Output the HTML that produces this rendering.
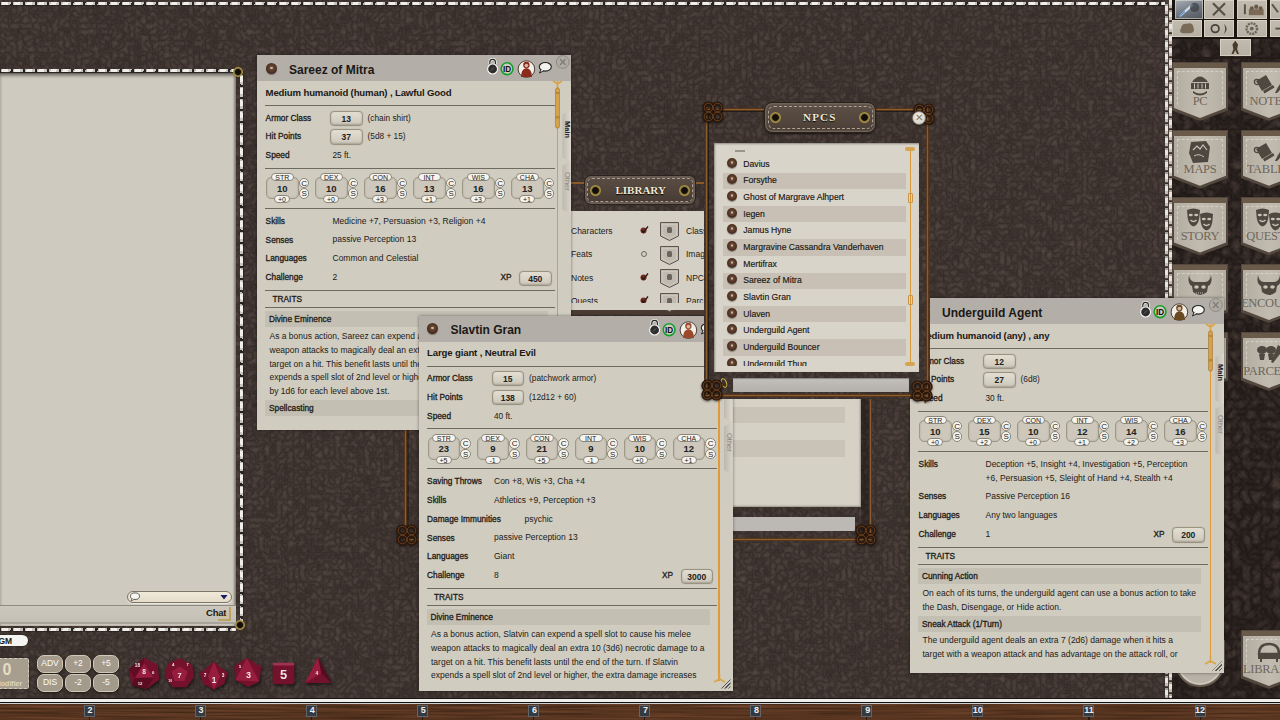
<!DOCTYPE html><html><head><meta charset="utf-8"><title>FG</title><style>
*{margin:0;padding:0;box-sizing:border-box}
html,body{width:1280px;height:720px;overflow:hidden}
body{position:relative;background:#3d342f;font-family:"Liberation Sans",sans-serif}
.t{position:absolute;white-space:nowrap;line-height:1;font-family:"Liberation Sans",sans-serif}
.sth{position:absolute;height:3px;border-radius:1px;background:repeating-linear-gradient(100deg,rgba(25,18,14,.5) 0 1.1px,#bdbab4 1.1px 2.4px,#efeeea 2.4px 8.2px,#c8c5bf 8.2px 10.7px,rgba(25,18,14,.5) 10.7px 11.9px);box-shadow:0 1px 1px rgba(0,0,0,.3)}
.stv{position:absolute;width:3px;border-radius:1px;background:repeating-linear-gradient(190deg,rgba(25,18,14,.5) 0 1.1px,#bdbab4 1.1px 2.4px,#efeeea 2.4px 8.2px,#c8c5bf 8.2px 10.7px,rgba(25,18,14,.5) 10.7px 11.9px);box-shadow:1px 0 1px rgba(0,0,0,.3)}
.stv2{position:absolute;width:3.2px;border-radius:1.6px;background:repeating-linear-gradient(180deg,#3a2e28 0 1.2px,#a6a39e 1.2px 2.6px,#e6e4e0 2.6px 8px,#c2bfba 8px 10.6px,#5a4e46 10.6px 12px)}
.box{position:absolute;border:1.3px solid #9a937f;border-radius:4px;background:linear-gradient(#e2ded2,#cdc8ba);box-shadow:inset 0 -1px 2px rgba(0,0,0,.2),0 0 1px rgba(0,0,0,.3);text-align:center;font-size:8.5px;font-weight:700;color:#222;font-family:"Liberation Sans",sans-serif}
.sbox{position:absolute;border:1px solid #9e9886;border-radius:5px;background:#cdc8bb;box-shadow:inset 0 0 2px rgba(0,0,0,.2);text-align:center;font-size:9.5px;font-weight:700;color:#222;font-family:"Liberation Sans",sans-serif}
.pill{position:absolute;border:1px solid #8a8578;border-radius:5px;background:#f6f4ee;text-align:center;font-size:7px;color:#222;font-family:"Liberation Sans",sans-serif}
.cs{position:absolute;width:10.5px;height:10.5px;border:1px solid #8a8578;border-radius:50%;background:#f6f4ee;text-align:center;font-size:8px;line-height:9px;color:#222;font-family:"Liberation Sans",sans-serif}
.sb{-webkit-text-stroke:0.3px currentColor}
.sb2{-webkit-text-stroke:0.15px currentColor}
</style></head><body>
<svg width="0" height="0" style="position:absolute"><defs><filter id="lea" x="0" y="0" width="100%" height="100%" color-interpolation-filters="sRGB"><feTurbulence type="turbulence" baseFrequency="0.17" numOctaves="2" seed="4"/><feColorMatrix type="matrix" values="0.16 0 0 0 0.205  0.14 0 0 0 0.17  0.13 0 0 0 0.156  0 0 0 0 1"/></filter><filter id="leaD" x="0" y="0" width="100%" height="100%" color-interpolation-filters="sRGB"><feTurbulence type="turbulence" baseFrequency="0.1" numOctaves="2" seed="9"/><feColorMatrix type="matrix" values="0.2 0 0 0 0.12  0.17 0 0 0 0.095  0.16 0 0 0 0.085  0 0 0 0 1"/></filter><filter id="wood" x="0" y="0" width="100%" height="100%" color-interpolation-filters="sRGB"><feTurbulence type="fractalNoise" baseFrequency="0.01 0.5" numOctaves="2" seed="2"/><feColorMatrix type="matrix" values="0.28 0 0 0 0.2  0.17 0 0 0 0.12  0.11 0 0 0 0.07  0 0 0 0 1"/></filter></defs></svg>
<div style="position:absolute;left:0.0px;top:0.0px;width:1280.0px;height:720.0px;filter:url(#lea);background:#000"></div>
<div style="position:absolute;left:1172.0px;top:0.0px;width:108.0px;height:698.0px;filter:url(#leaD);background:#000"></div>
<div class="sth" style="left:0.0px;top:2.0px;width:1166.0px"></div>
<div style="position:absolute;left:1164.8px;top:0.0px;width:7.2px;height:698.0px;background:#4a3e37"></div>
<div class="stv2" style="left:1165.2px;top:3.0px;height:695.0px"></div>
<div class="stv2" style="left:1168.6px;top:-3px;height:701px"></div>
<div style="position:absolute;left:0.0px;top:72.5px;width:236.0px;height:553.0px;background:#cecabf;box-shadow:inset 0 1px 0 #6f6c65,inset 0 3px 3px rgba(40,36,30,.45),inset -2px 0 2px rgba(40,36,30,.35)"></div>
<div style="position:absolute;left:0.0px;top:605.0px;width:236.0px;height:19.0px;background:linear-gradient(#cbc7bd,#c4c0b6);border-top:1px solid #8f8b82;border-bottom:2px solid #a8a49b"></div>
<div style="position:absolute;left:127px;top:591.2px;width:105px;height:12px;border:1px solid #7d7566;border-radius:6px;background:linear-gradient(#f1ead9,#e4dcc9);box-shadow:0 1px 1px rgba(255,255,255,.6)"></div>
<svg style="position:absolute;left:129px;top:592px" width="12" height="10" viewBox="0 0 12 10"><ellipse cx="6" cy="4.2" rx="4.5" ry="3.3" fill="#f8f6f0" stroke="#555" stroke-width="0.9"/><path d="M3 6.5 L2 9 L5.5 7.2" fill="#f8f6f0" stroke="#555" stroke-width="0.8"/></svg>
<svg style="position:absolute;left:220px;top:594px" width="8" height="6" viewBox="0 0 8 6"><path d="M0.5 1 L7.5 1 L4 5.5Z" fill="#1a1a6a"/></svg>
<div class="t " style="left:206.0px;top:607.5px;font-size:9.5px;font-weight:700;color:#1b1815;letter-spacing:-0.2px">Chat</div>
<svg style="position:absolute;left:216px;top:606px" width="16" height="16" viewBox="0 0 16 16"><path d="M14 1 V14 H2" fill="none" stroke="#b89a48" stroke-width="1.6"/><path d="M11 4 V11 H5" fill="none" stroke="#d8c070" stroke-width="1"/></svg>
<div class="sth" style="left:0.0px;top:68.5px;width:236.0px"></div>
<div class="stv" style="left:239.5px;top:74.0px;height:550.0px"></div>
<div class="sth" style="left:0.0px;top:628.0px;width:236.0px"></div>
<div style="position:absolute;left:233.0px;top:67.0px;width:10.0px;height:10.0px;border-radius:50%;background:radial-gradient(circle, #120e0b 0 38%, #6e5c26 46%, #b09848 62%, #8a7434 78%, #4a3e20 95%);"></div>
<div style="position:absolute;left:235.0px;top:619.5px;width:10.0px;height:10.0px;border-radius:50%;background:radial-gradient(circle, #120e0b 0 38%, #6e5c26 46%, #b09848 62%, #8a7434 78%, #4a3e20 95%);"></div>
<div style="position:absolute;left:0.0px;top:698.0px;width:1280.0px;height:1.0px;background:#1a1512"></div>
<div style="position:absolute;left:0.0px;top:699.0px;width:1280.0px;height:2.5px;background:#f0eeea"></div>
<div style="position:absolute;left:0.0px;top:701.5px;width:1280.0px;height:1.5px;background:#111"></div>
<div style="position:absolute;left:0.0px;top:703.0px;width:1280.0px;height:1.0px;background:#cfcfcf"></div>
<div style="position:absolute;left:0.0px;top:704.0px;width:1280.0px;height:16.0px;filter:url(#wood);background:#000"></div>
<div style="position:absolute;left:88.5px;top:705.0px;width:1.2px;height:15.0px;background:#2a1a10"></div>
<div style="position:absolute;left:83.5px;top:705.0px;width:11.0px;height:11.5px;background:#353a40;border:1px solid #5f666e"></div>
<div class="t " style="left:84.5px;top:706.4px;font-size:9px;font-weight:700;color:#eeeeee;width:11px;text-align:center">2</div>
<div style="position:absolute;left:199.6px;top:705.0px;width:1.2px;height:15.0px;background:#2a1a10"></div>
<div style="position:absolute;left:194.6px;top:705.0px;width:11.0px;height:11.5px;background:#353a40;border:1px solid #5f666e"></div>
<div class="t " style="left:195.6px;top:706.4px;font-size:9px;font-weight:700;color:#eeeeee;width:11px;text-align:center">3</div>
<div style="position:absolute;left:310.7px;top:705.0px;width:1.2px;height:15.0px;background:#2a1a10"></div>
<div style="position:absolute;left:305.7px;top:705.0px;width:11.0px;height:11.5px;background:#353a40;border:1px solid #5f666e"></div>
<div class="t " style="left:306.7px;top:706.4px;font-size:9px;font-weight:700;color:#eeeeee;width:11px;text-align:center">4</div>
<div style="position:absolute;left:421.8px;top:705.0px;width:1.2px;height:15.0px;background:#2a1a10"></div>
<div style="position:absolute;left:416.8px;top:705.0px;width:11.0px;height:11.5px;background:#353a40;border:1px solid #5f666e"></div>
<div class="t " style="left:417.8px;top:706.4px;font-size:9px;font-weight:700;color:#eeeeee;width:11px;text-align:center">5</div>
<div style="position:absolute;left:532.9px;top:705.0px;width:1.2px;height:15.0px;background:#2a1a10"></div>
<div style="position:absolute;left:527.9px;top:705.0px;width:11.0px;height:11.5px;background:#353a40;border:1px solid #5f666e"></div>
<div class="t " style="left:528.9px;top:706.4px;font-size:9px;font-weight:700;color:#eeeeee;width:11px;text-align:center">6</div>
<div style="position:absolute;left:644.0px;top:705.0px;width:1.2px;height:15.0px;background:#2a1a10"></div>
<div style="position:absolute;left:639.0px;top:705.0px;width:11.0px;height:11.5px;background:#353a40;border:1px solid #5f666e"></div>
<div class="t " style="left:640.0px;top:706.4px;font-size:9px;font-weight:700;color:#eeeeee;width:11px;text-align:center">7</div>
<div style="position:absolute;left:755.1px;top:705.0px;width:1.2px;height:15.0px;background:#2a1a10"></div>
<div style="position:absolute;left:750.1px;top:705.0px;width:11.0px;height:11.5px;background:#353a40;border:1px solid #5f666e"></div>
<div class="t " style="left:751.1px;top:706.4px;font-size:9px;font-weight:700;color:#eeeeee;width:11px;text-align:center">8</div>
<div style="position:absolute;left:866.2px;top:705.0px;width:1.2px;height:15.0px;background:#2a1a10"></div>
<div style="position:absolute;left:861.2px;top:705.0px;width:11.0px;height:11.5px;background:#353a40;border:1px solid #5f666e"></div>
<div class="t " style="left:862.2px;top:706.4px;font-size:9px;font-weight:700;color:#eeeeee;width:11px;text-align:center">9</div>
<div style="position:absolute;left:977.3px;top:705.0px;width:1.2px;height:15.0px;background:#2a1a10"></div>
<div style="position:absolute;left:972.3px;top:705.0px;width:11.0px;height:11.5px;background:#353a40;border:1px solid #5f666e"></div>
<div class="t " style="left:971.8px;top:706.4px;font-size:9px;font-weight:700;color:#eeeeee;width:12px;text-align:center">10</div>
<div style="position:absolute;left:1088.4px;top:705.0px;width:1.2px;height:15.0px;background:#2a1a10"></div>
<div style="position:absolute;left:1083.4px;top:705.0px;width:11.0px;height:11.5px;background:#353a40;border:1px solid #5f666e"></div>
<div class="t " style="left:1082.9px;top:706.4px;font-size:9px;font-weight:700;color:#eeeeee;width:12px;text-align:center">11</div>
<div style="position:absolute;left:1199.5px;top:705.0px;width:1.2px;height:15.0px;background:#2a1a10"></div>
<div style="position:absolute;left:1194.5px;top:705.0px;width:11.0px;height:11.5px;background:#353a40;border:1px solid #5f666e"></div>
<div class="t " style="left:1194.0px;top:706.4px;font-size:9px;font-weight:700;color:#eeeeee;width:12px;text-align:center">12</div>
<div style="position:absolute;left:1172.0px;top:0.0px;width:108.0px;height:57.0px;background:#1a1410"></div>
<div style="position:absolute;left:1172.0px;top:57.0px;width:108.0px;height:2.0px;background:#241b16"></div>
<div style="position:absolute;left:1174.7px;top:0.0px;width:28.0px;height:18.5px;background:linear-gradient(160deg,#a9b0b8,#6b7178 60%,#52575d);box-shadow:inset 0 0 0 1px rgba(235,230,215,.55)"></div>
<svg style="position:absolute;left:1174.7px;top:0px" width="28" height="18.5" viewBox="0 0 30 18"><path d="M4 16 L18 3 L20 5 L6 17Z" fill="#cfe0f0"/><path d="M4 16 L10 11 L11 12 L5 17Z" fill="#5a8ad0"/><circle cx="21" cy="7" r="5" fill="#3a3e44" opacity=".7"/></svg>
<div style="position:absolute;left:1204.4px;top:0.0px;width:30.0px;height:18.5px;background:linear-gradient(#c2bcb0,#b6b0a4);box-shadow:inset 0 0 0 1px rgba(235,230,215,.55)"></div>
<svg style="position:absolute;left:1204.4px;top:0px" width="30" height="18.5" viewBox="0 0 30 18"><g stroke="#5a5045" stroke-width="2.2"><path d="M9 3 L21 15"/><path d="M21 3 L9 15"/></g></svg>
<div style="position:absolute;left:1237.4px;top:0.0px;width:29.6px;height:18.5px;background:linear-gradient(#c2bcb0,#b6b0a4);box-shadow:inset 0 0 0 1px rgba(235,230,215,.55)"></div>
<svg style="position:absolute;left:1237.4px;top:0px" width="29.6" height="18.5" viewBox="0 0 30 18"><rect x="7" y="4" width="2" height="10" fill="#5a5045"/><path d="M12 15 L12 9 L27 9 L27 15Z" fill="#7a6a55"/><circle cx="15" cy="8" r="2" fill="#6a5a48"/><circle cx="19.5" cy="6.5" r="2.2" fill="#6a5a48"/><circle cx="24" cy="8" r="2" fill="#6a5a48"/></svg>
<div style="position:absolute;left:1270.0px;top:0.0px;width:30.0px;height:18.5px;background:linear-gradient(#c2bcb0,#b6b0a4);box-shadow:inset 0 0 0 1px rgba(235,230,215,.55)"></div>
<svg style="position:absolute;left:1270px;top:0px" width="30" height="18.5" viewBox="0 0 30 18"><path d="M2 4 L8 12" stroke="#5a5045" stroke-width="2"/></svg>
<div style="position:absolute;left:1172.0px;top:20.2px;width:29.8px;height:17.2px;background:linear-gradient(#c2bcb0,#b6b0a4);box-shadow:inset 0 0 0 1px rgba(235,230,215,.55)"></div>
<svg style="position:absolute;left:1172px;top:20.2px" width="29.8" height="17.2" viewBox="0 0 30 18"><path d="M9 8 Q10 3 15 4 Q21 2 22 8 Q24 13 18 14 L11 14 Q6 13 9 8Z" fill="#7a6a58"/></svg>
<div style="position:absolute;left:1204.4px;top:20.2px;width:30.0px;height:17.2px;background:linear-gradient(#c2bcb0,#b6b0a4);box-shadow:inset 0 0 0 1px rgba(235,230,215,.55)"></div>
<svg style="position:absolute;left:1204.4px;top:20.2px" width="30" height="17.2" viewBox="0 0 30 18"><circle cx="11" cy="9" r="4" fill="none" stroke="#4a4038" stroke-width="1.8"/><path d="M20 4 Q26 9 20 15 Q23 9 20 4Z" fill="#4a4038"/></svg>
<div style="position:absolute;left:1237.4px;top:20.2px;width:29.6px;height:17.2px;background:linear-gradient(#c2bcb0,#b6b0a4);box-shadow:inset 0 0 0 1px rgba(235,230,215,.55)"></div>
<svg style="position:absolute;left:1237.4px;top:20.2px" width="29.6" height="17.2" viewBox="0 0 30 18"><circle cx="15" cy="9" r="5.5" fill="none" stroke="#6a6058" stroke-width="2.5" stroke-dasharray="2 1"/><circle cx="15" cy="9" r="2" fill="#6a6058"/></svg>
<div style="position:absolute;left:1270.0px;top:20.2px;width:30.0px;height:17.2px;background:linear-gradient(#c2bcb0,#b6b0a4);box-shadow:inset 0 0 0 1px rgba(235,230,215,.55)"></div>
<svg style="position:absolute;left:1270px;top:20.2px" width="30" height="17.2" viewBox="0 0 30 18"><path d="M5 9 L12 9" stroke="#5a5045" stroke-width="2"/></svg>
<div style="position:absolute;left:1172.0px;top:39.0px;width:108.0px;height:18.0px;filter:url(#leaD);background:#000"></div>
<div style="position:absolute;left:1220.3px;top:39.0px;width:30.5px;height:16.8px;background:linear-gradient(#c2bcb0,#b6b0a4);box-shadow:inset 0 0 0 1px rgba(235,230,215,.55)"></div>
<svg style="position:absolute;left:1220.3px;top:39px" width="30.5" height="16.8" viewBox="0 0 30 18"><path d="M15 2 L18 6 L17 11 L19 16 L17 16 L15 12 L13 16 L11 16 L13 11 L12 6Z" fill="#4a3a2a"/></svg>
<div style="position:absolute;left:1172px;top:62px;width:56px;height:59px;background:#54483e;clip-path:polygon(0 0,100% 0,100% 82%,50% 100%,0 82%);box-shadow:0 0 2px #000"></div>
<div style="position:absolute;left:1173px;top:63px;width:54px;height:5px;background:#6a5a4a"></div>
<div style="position:absolute;left:1174px;top:68px;width:52px;height:50px;background:linear-gradient(90deg,#b3ada1,#c2bcb0 50%,#b5afa3);clip-path:polygon(0 0,100% 0,100% 80%,50% 100%,0 80%)"></div>
<div style="position:absolute;left:1177px;top:71px;width:46px;height:44px;border:1px dashed rgba(235,230,220,.55);border-bottom:none;clip-path:polygon(0 0,100% 0,100% 80%,50% 100%,0 80%)"></div>
<div class="t" style="left:1172px;top:95px;width:56px;text-align:center;font-family:'Liberation Serif',serif;font-size:12.5px;line-height:13px;color:#6e665b;letter-spacing:-0.3px">PC</div>
<svg style="position:absolute;left:1184px;top:72px" width="34" height="26" viewBox="0 0 34 26"><path d="M8 10 Q16 -1 24 10 Z" fill="#4f4840"/><rect x="7" y="11" width="18" height="6" fill="#4f4840"/><path d="M10.5 11.5 V16.5 M14 11.5 V16.5 M18 11.5 V16.5 M21.5 11.5 V16.5" stroke="#c8c2b6" stroke-width="1"/><path d="M9 19 Q16 24 23 19 L23 21 Q16 26 9 21 Z" fill="#4f4840"/></svg>
<div style="position:absolute;left:1241px;top:62px;width:56px;height:59px;background:#54483e;clip-path:polygon(0 0,100% 0,100% 82%,50% 100%,0 82%);box-shadow:0 0 2px #000"></div>
<div style="position:absolute;left:1242px;top:63px;width:54px;height:5px;background:#6a5a4a"></div>
<div style="position:absolute;left:1243px;top:68px;width:52px;height:50px;background:linear-gradient(90deg,#b3ada1,#c2bcb0 50%,#b5afa3);clip-path:polygon(0 0,100% 0,100% 80%,50% 100%,0 80%)"></div>
<div style="position:absolute;left:1246px;top:71px;width:46px;height:44px;border:1px dashed rgba(235,230,220,.55);border-bottom:none;clip-path:polygon(0 0,100% 0,100% 80%,50% 100%,0 80%)"></div>
<div class="t" style="left:1241px;top:95px;width:56px;text-align:center;font-family:'Liberation Serif',serif;font-size:12.5px;line-height:13px;color:#6e665b;letter-spacing:-0.3px">NOTES</div>
<svg style="position:absolute;left:1253px;top:72px" width="34" height="26" viewBox="0 0 34 26"><path d="M3 9 L13 3 L19 13 L9 19 Z" fill="#4f4840"/><circle cx="4" cy="10" r="2.6" fill="none" stroke="#4f4840" stroke-width="1.4"/><path d="M10 19 L20 13 L21.5 15.5 L11.5 21.5Z" fill="#4f4840"/><path d="M22 21 Q27 10 33 6 Q31 14 24 21Z" fill="#4f4840"/></svg>
<div style="position:absolute;left:1172px;top:129.7px;width:56px;height:59px;background:#54483e;clip-path:polygon(0 0,100% 0,100% 82%,50% 100%,0 82%);box-shadow:0 0 2px #000"></div>
<div style="position:absolute;left:1173px;top:130.7px;width:54px;height:5px;background:#6a5a4a"></div>
<div style="position:absolute;left:1174px;top:135.7px;width:52px;height:50px;background:linear-gradient(90deg,#b3ada1,#c2bcb0 50%,#b5afa3);clip-path:polygon(0 0,100% 0,100% 80%,50% 100%,0 80%)"></div>
<div style="position:absolute;left:1177px;top:138.7px;width:46px;height:44px;border:1px dashed rgba(235,230,220,.55);border-bottom:none;clip-path:polygon(0 0,100% 0,100% 80%,50% 100%,0 80%)"></div>
<div class="t" style="left:1172px;top:162.7px;width:56px;text-align:center;font-family:'Liberation Serif',serif;font-size:12.5px;line-height:13px;color:#6e665b;letter-spacing:-0.3px">MAPS</div>
<svg style="position:absolute;left:1184px;top:139.7px" width="34" height="26" viewBox="0 0 34 26"><path d="M7 2 L22 1 L26 7 L24 22 L9 23 L5 13 Z" fill="#4f4840"/><path d="M9 10 L13 6 L16 9 L19 5 L23 10" stroke="#c8c2b6" stroke-width="1.2" fill="none"/><path d="M10 16 Q15 13 20 17" stroke="#c8c2b6" stroke-width="1" fill="none"/></svg>
<div style="position:absolute;left:1241px;top:129.7px;width:56px;height:59px;background:#54483e;clip-path:polygon(0 0,100% 0,100% 82%,50% 100%,0 82%);box-shadow:0 0 2px #000"></div>
<div style="position:absolute;left:1242px;top:130.7px;width:54px;height:5px;background:#6a5a4a"></div>
<div style="position:absolute;left:1243px;top:135.7px;width:52px;height:50px;background:linear-gradient(90deg,#b3ada1,#c2bcb0 50%,#b5afa3);clip-path:polygon(0 0,100% 0,100% 80%,50% 100%,0 80%)"></div>
<div style="position:absolute;left:1246px;top:138.7px;width:46px;height:44px;border:1px dashed rgba(235,230,220,.55);border-bottom:none;clip-path:polygon(0 0,100% 0,100% 80%,50% 100%,0 80%)"></div>
<div class="t" style="left:1241px;top:162.7px;width:56px;text-align:center;font-family:'Liberation Serif',serif;font-size:12.5px;line-height:13px;color:#6e665b;letter-spacing:-0.3px">TABLES</div>
<svg style="position:absolute;left:1253px;top:139.7px" width="34" height="26" viewBox="0 0 34 26"><path d="M3 9 L13 3 L19 13 L9 19 Z" fill="#4f4840"/><circle cx="4" cy="10" r="2.6" fill="none" stroke="#4f4840" stroke-width="1.4"/><path d="M10 19 L20 13 L21.5 15.5 L11.5 21.5Z" fill="#4f4840"/><path d="M22 21 Q27 10 33 6 Q31 14 24 21Z" fill="#4f4840"/></svg>
<div style="position:absolute;left:1172px;top:196.5px;width:56px;height:59px;background:#54483e;clip-path:polygon(0 0,100% 0,100% 82%,50% 100%,0 82%);box-shadow:0 0 2px #000"></div>
<div style="position:absolute;left:1173px;top:197.5px;width:54px;height:5px;background:#6a5a4a"></div>
<div style="position:absolute;left:1174px;top:202.5px;width:52px;height:50px;background:linear-gradient(90deg,#b3ada1,#c2bcb0 50%,#b5afa3);clip-path:polygon(0 0,100% 0,100% 80%,50% 100%,0 80%)"></div>
<div style="position:absolute;left:1177px;top:205.5px;width:46px;height:44px;border:1px dashed rgba(235,230,220,.55);border-bottom:none;clip-path:polygon(0 0,100% 0,100% 80%,50% 100%,0 80%)"></div>
<div class="t" style="left:1172px;top:229.5px;width:56px;text-align:center;font-family:'Liberation Serif',serif;font-size:12.5px;line-height:13px;color:#6e665b;letter-spacing:-0.3px">STORY</div>
<svg style="position:absolute;left:1184px;top:206.5px" width="34" height="26" viewBox="0 0 34 26"><g transform="translate(2,1)"><path d="M1 2 Q7.5 -1 14 2 L13.3 10 Q12 17.5 7.5 18.5 Q3 17.5 1.7 10 Z" fill="#4f4840"/><ellipse cx="4.8" cy="7" rx="2" ry="1.3" fill="#c8c2b6"/><ellipse cx="10.2" cy="7" rx="2" ry="1.3" fill="#c8c2b6"/><path d="M4.5 12 Q7.5 15 10.5 12" stroke="#c8c2b6" stroke-width="1.4" fill="none"/></g><g transform="translate(15,5)"><path d="M1 2 Q7.5 -1 14 2 L13.3 10 Q12 17.5 7.5 18.5 Q3 17.5 1.7 10 Z" fill="#4f4840"/><ellipse cx="4.8" cy="7" rx="2" ry="1.3" fill="#c8c2b6"/><ellipse cx="10.2" cy="7" rx="2" ry="1.3" fill="#c8c2b6"/><path d="M4.5 12 Q7.5 15 10.5 12" stroke="#c8c2b6" stroke-width="1.4" fill="none"/></g></svg>
<div style="position:absolute;left:1241px;top:196.5px;width:56px;height:59px;background:#54483e;clip-path:polygon(0 0,100% 0,100% 82%,50% 100%,0 82%);box-shadow:0 0 2px #000"></div>
<div style="position:absolute;left:1242px;top:197.5px;width:54px;height:5px;background:#6a5a4a"></div>
<div style="position:absolute;left:1243px;top:202.5px;width:52px;height:50px;background:linear-gradient(90deg,#b3ada1,#c2bcb0 50%,#b5afa3);clip-path:polygon(0 0,100% 0,100% 80%,50% 100%,0 80%)"></div>
<div style="position:absolute;left:1246px;top:205.5px;width:46px;height:44px;border:1px dashed rgba(235,230,220,.55);border-bottom:none;clip-path:polygon(0 0,100% 0,100% 80%,50% 100%,0 80%)"></div>
<div class="t" style="left:1241px;top:229.5px;width:56px;text-align:center;font-family:'Liberation Serif',serif;font-size:12.5px;line-height:13px;color:#6e665b;letter-spacing:-0.3px">QUESTS</div>
<svg style="position:absolute;left:1253px;top:206.5px" width="34" height="26" viewBox="0 0 34 26"><g transform="translate(2,1)"><path d="M1 2 Q7.5 -1 14 2 L13.3 10 Q12 17.5 7.5 18.5 Q3 17.5 1.7 10 Z" fill="#4f4840"/><ellipse cx="4.8" cy="7" rx="2" ry="1.3" fill="#c8c2b6"/><ellipse cx="10.2" cy="7" rx="2" ry="1.3" fill="#c8c2b6"/><path d="M4.5 12 Q7.5 15 10.5 12" stroke="#c8c2b6" stroke-width="1.4" fill="none"/></g><g transform="translate(15,5)"><path d="M1 2 Q7.5 -1 14 2 L13.3 10 Q12 17.5 7.5 18.5 Q3 17.5 1.7 10 Z" fill="#4f4840"/><ellipse cx="4.8" cy="7" rx="2" ry="1.3" fill="#c8c2b6"/><ellipse cx="10.2" cy="7" rx="2" ry="1.3" fill="#c8c2b6"/><path d="M4.5 12 Q7.5 15 10.5 12" stroke="#c8c2b6" stroke-width="1.4" fill="none"/></g></svg>
<div style="position:absolute;left:1172px;top:264px;width:56px;height:59px;background:#54483e;clip-path:polygon(0 0,100% 0,100% 82%,50% 100%,0 82%);box-shadow:0 0 2px #000"></div>
<div style="position:absolute;left:1173px;top:265px;width:54px;height:5px;background:#6a5a4a"></div>
<div style="position:absolute;left:1174px;top:270px;width:52px;height:50px;background:linear-gradient(90deg,#b3ada1,#c2bcb0 50%,#b5afa3);clip-path:polygon(0 0,100% 0,100% 80%,50% 100%,0 80%)"></div>
<div style="position:absolute;left:1177px;top:273px;width:46px;height:44px;border:1px dashed rgba(235,230,220,.55);border-bottom:none;clip-path:polygon(0 0,100% 0,100% 80%,50% 100%,0 80%)"></div>
<svg style="position:absolute;left:1184px;top:274px" width="34" height="26" viewBox="0 0 34 26"><path d="M5 1 Q6 8 11 8 L21 8 Q26 8 27 1 Q29 10 24 12 L23 18 Q16 24 9 18 L8 12 Q3 10 5 1Z" fill="#4f4840"/><ellipse cx="12.5" cy="13" rx="2.3" ry="1.7" fill="#c8c2b6"/><ellipse cx="19.5" cy="13" rx="2.3" ry="1.7" fill="#c8c2b6"/><path d="M12 19 H20" stroke="#c8c2b6" stroke-width="1" stroke-dasharray="1 1"/></svg>
<div style="position:absolute;left:1241px;top:264px;width:56px;height:59px;background:#54483e;clip-path:polygon(0 0,100% 0,100% 82%,50% 100%,0 82%);box-shadow:0 0 2px #000"></div>
<div style="position:absolute;left:1242px;top:265px;width:54px;height:5px;background:#6a5a4a"></div>
<div style="position:absolute;left:1243px;top:270px;width:52px;height:50px;background:linear-gradient(90deg,#b3ada1,#c2bcb0 50%,#b5afa3);clip-path:polygon(0 0,100% 0,100% 80%,50% 100%,0 80%)"></div>
<div style="position:absolute;left:1246px;top:273px;width:46px;height:44px;border:1px dashed rgba(235,230,220,.55);border-bottom:none;clip-path:polygon(0 0,100% 0,100% 80%,50% 100%,0 80%)"></div>
<div class="t" style="left:1241px;top:297px;width:56px;text-align:center;font-family:'Liberation Serif',serif;font-size:12.5px;line-height:13px;color:#6e665b;letter-spacing:-0.3px">ENCOUNTERS</div>
<svg style="position:absolute;left:1253px;top:274px" width="34" height="26" viewBox="0 0 34 26"><path d="M5 1 Q6 8 11 8 L21 8 Q26 8 27 1 Q29 10 24 12 L23 18 Q16 24 9 18 L8 12 Q3 10 5 1Z" fill="#4f4840"/><ellipse cx="12.5" cy="13" rx="2.3" ry="1.7" fill="#c8c2b6"/><ellipse cx="19.5" cy="13" rx="2.3" ry="1.7" fill="#c8c2b6"/></svg>
<div style="position:absolute;left:1172px;top:332px;width:56px;height:59px;background:#54483e;clip-path:polygon(0 0,100% 0,100% 82%,50% 100%,0 82%);box-shadow:0 0 2px #000"></div>
<div style="position:absolute;left:1173px;top:333px;width:54px;height:5px;background:#6a5a4a"></div>
<div style="position:absolute;left:1174px;top:338px;width:52px;height:50px;background:linear-gradient(90deg,#b3ada1,#c2bcb0 50%,#b5afa3);clip-path:polygon(0 0,100% 0,100% 80%,50% 100%,0 80%)"></div>
<div style="position:absolute;left:1177px;top:341px;width:46px;height:44px;border:1px dashed rgba(235,230,220,.55);border-bottom:none;clip-path:polygon(0 0,100% 0,100% 80%,50% 100%,0 80%)"></div>
<svg style="position:absolute;left:1184px;top:342px" width="34" height="26" viewBox="0 0 34 26"><path d="M5 1 Q6 8 11 8 L21 8 Q26 8 27 1 Q29 10 24 12 L23 18 Q16 24 9 18 L8 12 Q3 10 5 1Z" fill="#4f4840"/><ellipse cx="12.5" cy="13" rx="2.3" ry="1.7" fill="#c8c2b6"/><ellipse cx="19.5" cy="13" rx="2.3" ry="1.7" fill="#c8c2b6"/><path d="M12 19 H20" stroke="#c8c2b6" stroke-width="1" stroke-dasharray="1 1"/></svg>
<div style="position:absolute;left:1241px;top:332px;width:56px;height:59px;background:#54483e;clip-path:polygon(0 0,100% 0,100% 82%,50% 100%,0 82%);box-shadow:0 0 2px #000"></div>
<div style="position:absolute;left:1242px;top:333px;width:54px;height:5px;background:#6a5a4a"></div>
<div style="position:absolute;left:1243px;top:338px;width:52px;height:50px;background:linear-gradient(90deg,#b3ada1,#c2bcb0 50%,#b5afa3);clip-path:polygon(0 0,100% 0,100% 80%,50% 100%,0 80%)"></div>
<div style="position:absolute;left:1246px;top:341px;width:46px;height:44px;border:1px dashed rgba(235,230,220,.55);border-bottom:none;clip-path:polygon(0 0,100% 0,100% 80%,50% 100%,0 80%)"></div>
<div class="t" style="left:1241px;top:365px;width:56px;text-align:center;font-family:'Liberation Serif',serif;font-size:12.5px;line-height:13px;color:#6e665b;letter-spacing:-0.3px">PARCELS</div>
<svg style="position:absolute;left:1253px;top:342px" width="34" height="26" viewBox="0 0 34 26"><ellipse cx="9" cy="8" rx="5" ry="4" fill="#4f4840"/><ellipse cx="18" cy="8" rx="5" ry="4" fill="#4f4840"/><path d="M6 12 L12 12 L11 18 L7 18Z M15 12 L21 12 L20 18 L16 18Z" fill="#4f4840"/><path d="M25 3 L31 7 L20 21 L18 20Z" fill="#4f4840"/></svg>
<div style="position:absolute;left:1241px;top:630px;width:56px;height:59px;background:#54483e;clip-path:polygon(0 0,100% 0,100% 82%,50% 100%,0 82%);box-shadow:0 0 2px #000"></div>
<div style="position:absolute;left:1242px;top:631px;width:54px;height:5px;background:#6a5a4a"></div>
<div style="position:absolute;left:1243px;top:636px;width:52px;height:50px;background:linear-gradient(90deg,#b3ada1,#c2bcb0 50%,#b5afa3);clip-path:polygon(0 0,100% 0,100% 80%,50% 100%,0 80%)"></div>
<div style="position:absolute;left:1246px;top:639px;width:46px;height:44px;border:1px dashed rgba(235,230,220,.55);border-bottom:none;clip-path:polygon(0 0,100% 0,100% 80%,50% 100%,0 80%)"></div>
<div class="t" style="left:1241px;top:663px;width:56px;text-align:center;font-family:'Liberation Serif',serif;font-size:12.5px;line-height:13px;color:#6e665b;letter-spacing:-0.3px">LIBRARY</div>
<svg style="position:absolute;left:1253px;top:640px" width="34" height="26" viewBox="0 0 34 26"><path d="M6 14 Q6 4 16 4 Q26 4 26 14 Z" fill="none" stroke="#4f4840" stroke-width="2.4"/><rect x="5" y="13" width="22" height="6" fill="#4f4840"/><path d="M8 19 V22 M24 19 V22" stroke="#4f4840" stroke-width="2"/></svg>
<div style="position:absolute;left:1175px;top:640px;width:50px;height:47px;border-radius:0 0 25px 25px;background:#b8b2a7;border:2px solid #6a5e52;box-shadow:inset 0 0 0 2px #cfc9bd"></div>
<div style="position:absolute;left:571.0px;top:100.0px;width:140.0px;height:212.0px;filter:url(#lea);background:#000"></div>
<div style="position:absolute;left:571.0px;top:182.0px;width:133.0px;height:1.5px;background:#8a5a2a"></div>
<div style="position:absolute;left:571.0px;top:211.0px;width:133.0px;height:99.0px;background:#d5d0c5"></div>
<div style="position:absolute;left:571.0px;top:310.0px;width:133.0px;height:5.0px;background:#4a3c33"></div>
<div style="position:absolute;left:584px;top:175px;width:112px;height:30px;border-radius:7px;background:linear-gradient(#5b4e45,#463b33);border:1px solid #2c231e;box-shadow:inset 0 0 0 2px #6a5c52"></div>
<div style="position:absolute;left:587px;top:178px;width:106px;height:24px;border-radius:5px;border:1px dashed #a89d90"></div>
<div style="position:absolute;left:590.0px;top:184.5px;width:11.0px;height:11.0px;border-radius:50%;background:radial-gradient(circle, #120e0b 0 38%, #6e5c26 46%, #b09848 62%, #8a7434 78%, #4a3e20 95%);"></div>
<div style="position:absolute;left:679.0px;top:184.5px;width:11.0px;height:11.0px;border-radius:50%;background:radial-gradient(circle, #120e0b 0 38%, #6e5c26 46%, #b09848 62%, #8a7434 78%, #4a3e20 95%);"></div>
<div class="t " style="left:615.5px;top:185.0px;font-size:11px;font-weight:700;color:#f0e8d2;font-family:'Liberation Serif',serif;text-shadow:0 1px 1px #000">LIBRARY</div>
<div class="t " style="left:571.0px;top:226.6px;font-size:8.5px;font-weight:400;color:#1c1a17;">Characters</div>
<svg style="position:absolute;left:639px;top:224.75px" width="10" height="10" viewBox="0 0 10 10"><circle cx="4.5" cy="5.5" r="3" fill="#7a2a22"/><path d="M2.5 5 L4.5 7.5 L9 1.5" fill="none" stroke="#2a1a14" stroke-width="1.3"/></svg>
<svg style="position:absolute;left:660px;top:222.25px" width="19" height="19" viewBox="0 0 19 19"><path d="M0.5 0.5 H18.5 V14 L9.5 18.5 L0.5 14 Z" fill="#c0bab0" stroke="#5a554e" stroke-width="1"/><path d="M2.5 2.5 H16.5 V13 L9.5 16.5 L2.5 13 Z" fill="none" stroke="#e8e4dc" stroke-width="0.6" stroke-dasharray="1 1"/><rect x="7" y="5" width="5" height="6" rx="1.5" fill="#6a655c"/></svg>
<div class="t " style="left:686.0px;top:226.6px;font-size:8.5px;font-weight:400;color:#1c1a17;">Class</div>
<div class="t " style="left:571.0px;top:250.1px;font-size:8.5px;font-weight:400;color:#1c1a17;">Feats</div>
<div style="position:absolute;left:640.5px;top:250.8px;width:6.5px;height:6.5px;border:1px solid #6a665e;border-radius:50%"></div>
<svg style="position:absolute;left:660px;top:245.75px" width="19" height="19" viewBox="0 0 19 19"><path d="M0.5 0.5 H18.5 V14 L9.5 18.5 L0.5 14 Z" fill="#c0bab0" stroke="#5a554e" stroke-width="1"/><path d="M2.5 2.5 H16.5 V13 L9.5 16.5 L2.5 13 Z" fill="none" stroke="#e8e4dc" stroke-width="0.6" stroke-dasharray="1 1"/><rect x="7" y="5" width="5" height="6" rx="1.5" fill="#6a655c"/></svg>
<div class="t " style="left:686.0px;top:250.1px;font-size:8.5px;font-weight:400;color:#1c1a17;">Imag</div>
<div class="t " style="left:571.0px;top:273.6px;font-size:8.5px;font-weight:400;color:#1c1a17;">Notes</div>
<svg style="position:absolute;left:639px;top:271.75px" width="10" height="10" viewBox="0 0 10 10"><circle cx="4.5" cy="5.5" r="3" fill="#7a2a22"/><path d="M2.5 5 L4.5 7.5 L9 1.5" fill="none" stroke="#2a1a14" stroke-width="1.3"/></svg>
<svg style="position:absolute;left:660px;top:269.25px" width="19" height="19" viewBox="0 0 19 19"><path d="M0.5 0.5 H18.5 V14 L9.5 18.5 L0.5 14 Z" fill="#c0bab0" stroke="#5a554e" stroke-width="1"/><path d="M2.5 2.5 H16.5 V13 L9.5 16.5 L2.5 13 Z" fill="none" stroke="#e8e4dc" stroke-width="0.6" stroke-dasharray="1 1"/><rect x="7" y="5" width="5" height="6" rx="1.5" fill="#6a655c"/></svg>
<div class="t " style="left:686.0px;top:273.6px;font-size:8.5px;font-weight:400;color:#1c1a17;">NPCs</div>
<div class="t " style="left:571.0px;top:297.1px;font-size:8.5px;font-weight:400;color:#1c1a17;">Quests</div>
<svg style="position:absolute;left:639px;top:295.25px" width="10" height="10" viewBox="0 0 10 10"><circle cx="4.5" cy="5.5" r="3" fill="#7a2a22"/><path d="M2.5 5 L4.5 7.5 L9 1.5" fill="none" stroke="#2a1a14" stroke-width="1.3"/></svg>
<svg style="position:absolute;left:660px;top:292.75px" width="19" height="19" viewBox="0 0 19 19"><path d="M0.5 0.5 H18.5 V14 L9.5 18.5 L0.5 14 Z" fill="#c0bab0" stroke="#5a554e" stroke-width="1"/><path d="M2.5 2.5 H16.5 V13 L9.5 16.5 L2.5 13 Z" fill="none" stroke="#e8e4dc" stroke-width="0.6" stroke-dasharray="1 1"/><rect x="7" y="5" width="5" height="6" rx="1.5" fill="#6a655c"/></svg>
<div class="t " style="left:686.0px;top:297.1px;font-size:8.5px;font-weight:400;color:#1c1a17;">Parc</div>
<div style="position:absolute;left:571.0px;top:302.5px;width:133.0px;height:7.5px;background:#d5d0c5"></div>
<div style="position:absolute;left:400.0px;top:393.0px;width:474.0px;height:150.0px;filter:url(#lea);background:#000"></div>
<div style="position:absolute;left:404.0px;top:380.0px;width:3.0px;height:160.0px;background:linear-gradient(90deg,#3e2410,#8a5c30,#3e2410)"></div>
<div style="position:absolute;left:407.0px;top:380.0px;width:2.0px;height:157.0px;background:rgba(0,0,0,.3)"></div>
<div style="position:absolute;left:715.0px;top:398.0px;width:146.0px;height:109.0px;background:#d6d1c5"></div>
<div style="position:absolute;left:715.0px;top:406.5px;width:130.0px;height:16.5px;background:#c9c2b6"></div>
<div style="position:absolute;left:715.0px;top:440.0px;width:130.0px;height:17.0px;background:#c9c2b6"></div>
<div style="position:absolute;left:715.0px;top:517.0px;width:140.0px;height:14.0px;background:#bcb8b4"></div>
<div style="position:absolute;left:868.5px;top:398.0px;width:3.0px;height:143.0px;background:linear-gradient(90deg,#3e2410,#8a5c30,#3e2410)"></div>
<div style="position:absolute;left:404.0px;top:537.5px;width:467.0px;height:3.0px;background:linear-gradient(#3e2410,#8a5c30,#3e2410)"></div>
<div style="position:absolute;left:715.0px;top:398.0px;width:146.0px;height:109.0px;box-shadow:inset -1px -1px 2px rgba(0,0,0,.3)"></div>
<div style="position:absolute;left:860.6px;top:398.0px;width:8.0px;height:140.0px;background:rgba(20,14,10,.35)"></div>
<svg style="position:absolute;left:853px;top:522px;filter:drop-shadow(0 1px 1px rgba(0,0,0,.6))" width="26" height="26" viewBox="0 0 26 26"><g fill="none" stroke="#2a170b" stroke-width="3.6"><circle cx="8.5" cy="8.5" r="4.3"/><circle cx="17.5" cy="8.5" r="4.3"/><circle cx="8.5" cy="17.5" r="4.3"/><circle cx="17.5" cy="17.5" r="4.3"/></g><g fill="none" stroke="#6e4322" stroke-width="0.9"><circle cx="8.5" cy="8.5" r="4.3"/><circle cx="17.5" cy="8.5" r="4.3"/><circle cx="8.5" cy="17.5" r="4.3"/><circle cx="17.5" cy="17.5" r="4.3"/></g></svg>
<svg style="position:absolute;left:394px;top:522px;filter:drop-shadow(0 1px 1px rgba(0,0,0,.6))" width="26" height="26" viewBox="0 0 26 26"><g fill="none" stroke="#2a170b" stroke-width="3.6"><circle cx="8.5" cy="8.5" r="4.3"/><circle cx="17.5" cy="8.5" r="4.3"/><circle cx="8.5" cy="17.5" r="4.3"/><circle cx="17.5" cy="17.5" r="4.3"/></g><g fill="none" stroke="#6e4322" stroke-width="0.9"><circle cx="8.5" cy="8.5" r="4.3"/><circle cx="17.5" cy="8.5" r="4.3"/><circle cx="8.5" cy="17.5" r="4.3"/><circle cx="17.5" cy="17.5" r="4.3"/></g></svg>
<div style="position:absolute;left:257.0px;top:55.0px;width:314.0px;height:375.0px;background:#d0ccc0;box-shadow:0 0 3px rgba(0,0,0,.45);overflow:visible">
<div style="position:absolute;left:0.0px;top:0.0px;width:314.0px;height:26.0px;background:#b3afa8"></div>
<div style="position:absolute;left:8.5px;top:7.5px;width:11.0px;height:11.0px;border-radius:50%;background:radial-gradient(circle at 50% 45%, #c9b7a4 0 12%, #6b4a36 18%, #4a2e20 60%, #2a1a12 100%);box-shadow:0 1px 1px rgba(0,0,0,.35)"></div>
<div class="t " style="left:32.0px;top:8.6px;font-size:12px;font-weight:700;color:#1b1815;">Sareez of Mitra</div>
<svg style="position:absolute;left:226px;top:0" width="88" height="26" viewBox="0 0 88 26"><path d="M6.8 9 V7.2 a2.8 2.8 0 0 1 5.6 0 V9" fill="none" stroke="#f4f2ee" stroke-width="2.6"/><path d="M6.8 9 V7.2 a2.8 2.8 0 0 1 5.6 0 V9" fill="none" stroke="#2a2a2a" stroke-width="1.2"/><circle cx="9.6" cy="14" r="5" fill="#2e2e2e" stroke="#f4f2ee" stroke-width="1.2"/><path d="M8 15.5 L11 12.5" stroke="#777" stroke-width="0.8"/><circle cx="24.1" cy="13.7" r="5.9" fill="#cfcbc3" stroke="#14a02a" stroke-width="1.6"/><text x="24.1" y="16.8" font-family="Liberation Sans" font-size="8.2" font-weight="700" fill="#111" text-anchor="middle">ID</text><circle cx="43.4" cy="14.1" r="8.3" fill="#f2eee8" stroke="#2a1a14" stroke-width="0.8"/><path d="M38 22 Q38 14 43.4 13 Q49 14 49 22 Z" fill="#8a2a1a"/><circle cx="43.4" cy="10" r="3.2" fill="#8a2a1a"/><circle cx="43.4" cy="10.6" r="1.8" fill="#d8b8a0"/><ellipse cx="62.3" cy="11.8" rx="6" ry="4.3" fill="#f4f2ec" stroke="#222" stroke-width="1.1"/><path d="M58 14.5 L56.5 18 L61 15.6" fill="#f4f2ec" stroke="#222" stroke-width="1"/><circle cx="79.8" cy="7" r="6.4" fill="#b0aca4" stroke="#8c887f" stroke-width="1"/><path d="M77 4 L82.6 10 M82.6 4 L77 10" stroke="#7f7b73" stroke-width="1.2"/></svg>
<div style="position:absolute;left:299.6px;top:27.0px;width:1.5px;height:338.0px;background:#e09a3a"></div>
<svg style="position:absolute;left:294px;top:25px" width="13" height="50" viewBox="0 0 13 50"><path d="M2 1 L6.5 4 L11 1 M6.5 1 V8" stroke="#d9a548" stroke-width="1.6" fill="none"/><rect x="4.6" y="8" width="3.8" height="40" rx="1.5" fill="#d8a44c" stroke="#9a6a28" stroke-width="0.6"/><rect x="4.2" y="12" width="4.6" height="2" fill="#b88838"/><rect x="4.2" y="36" width="4.6" height="2.5" fill="#b88838"/></svg>
<svg style="position:absolute;left:294px;top:358px" width="13" height="10" viewBox="0 0 13 10"><path d="M6.5 0 V6 M1 8 L6.5 5 L12 8" stroke="#d9a548" stroke-width="1.6" fill="none"/></svg>
<div style="position:absolute;left:305.4px;top:55.0px;width:8.6px;height:51.7px;background:linear-gradient(90deg,#bfbab0,#dcd8ce);clip-path:polygon(0 8%,100% 0,100% 100%,0 92%)"></div>
<div class="t" style="left:306.5px;top:66px;font-size:7.5px;font-weight:700;color:#222;writing-mode:vertical-rl">Main</div>
<div style="position:absolute;left:305.4px;top:106.7px;width:8.6px;height:52.3px;background:linear-gradient(90deg,#bdb8ae,#d6d2c8);clip-path:polygon(0 8%,100% 0,100% 100%,0 92%)"></div>
<div class="t" style="left:306.5px;top:117px;font-size:7.5px;color:#8a867e;writing-mode:vertical-rl">Other</div>
<div class="t " style="left:8.6px;top:32.5px;font-size:9.6px;font-weight:700;color:#1b1815;letter-spacing:-0.15px">Medium humanoid (human) , Lawful Good</div>
<div style="position:absolute;left:8.0px;top:50.0px;width:290.0px;height:1.0px;background:#6d6a60"></div>
<div class="t sb" style="left:8.6px;top:58.6px;font-size:8.3px;font-weight:400;color:#1f1b17;">Armor Class</div>
<div class="t sb" style="left:8.6px;top:77.4px;font-size:8.3px;font-weight:400;color:#1f1b17;">Hit Points</div>
<div class="t sb" style="left:8.6px;top:96.0px;font-size:8.3px;font-weight:400;color:#1f1b17;">Speed</div>
<div class="box" style="left:73px;top:55.6px;width:32.5px;height:15.4px;line-height:14px">13</div>
<div class="box" style="left:73px;top:74.4px;width:32.5px;height:15.4px;line-height:14px">37</div>
<div class="t " style="left:110.5px;top:58.6px;font-size:8.3px;font-weight:400;color:#24211d;">(chain shirt)</div>
<div class="t " style="left:110.5px;top:77.4px;font-size:8.3px;font-weight:400;color:#24211d;">(5d8 + 15)</div>
<div class="t " style="left:75.5px;top:96.0px;font-size:8.3px;font-weight:400;color:#1c1a17;">25 ft.</div>
<div style="position:absolute;left:8.0px;top:112.8px;width:290.0px;height:1.0px;background:#6d6a60"></div>
<div class="sbox" style="left:9px;top:121.9px;width:32.6px;height:22.5px;line-height:22px">10</div>
<div class="pill" style="left:13.5px;top:118.4px;width:23.5px;height:8px;line-height:7.5px">STR</div>
<div class="pill" style="left:17px;top:140.4px;width:16px;height:8px;line-height:7.5px">+0</div>
<div class="cs" style="left:41.8px;top:122.8px">C</div>
<div class="cs" style="left:41.8px;top:133.3px">S</div>
<div class="sbox" style="left:58px;top:121.9px;width:32.6px;height:22.5px;line-height:22px">10</div>
<div class="pill" style="left:62.5px;top:118.4px;width:23.5px;height:8px;line-height:7.5px">DEX</div>
<div class="pill" style="left:66px;top:140.4px;width:16px;height:8px;line-height:7.5px">+0</div>
<div class="cs" style="left:90.8px;top:122.8px">C</div>
<div class="cs" style="left:90.8px;top:133.3px">S</div>
<div class="sbox" style="left:107px;top:121.9px;width:32.6px;height:22.5px;line-height:22px">16</div>
<div class="pill" style="left:111.5px;top:118.4px;width:23.5px;height:8px;line-height:7.5px">CON</div>
<div class="pill" style="left:115px;top:140.4px;width:16px;height:8px;line-height:7.5px">+3</div>
<div class="cs" style="left:139.8px;top:122.8px">C</div>
<div class="cs" style="left:139.8px;top:133.3px">S</div>
<div class="sbox" style="left:156px;top:121.9px;width:32.6px;height:22.5px;line-height:22px">13</div>
<div class="pill" style="left:160.5px;top:118.4px;width:23.5px;height:8px;line-height:7.5px">INT</div>
<div class="pill" style="left:164px;top:140.4px;width:16px;height:8px;line-height:7.5px">+1</div>
<div class="cs" style="left:188.8px;top:122.8px">C</div>
<div class="cs" style="left:188.8px;top:133.3px">S</div>
<div class="sbox" style="left:205px;top:121.9px;width:32.6px;height:22.5px;line-height:22px">16</div>
<div class="pill" style="left:209.5px;top:118.4px;width:23.5px;height:8px;line-height:7.5px">WIS</div>
<div class="pill" style="left:213px;top:140.4px;width:16px;height:8px;line-height:7.5px">+3</div>
<div class="cs" style="left:237.8px;top:122.8px">C</div>
<div class="cs" style="left:237.8px;top:133.3px">S</div>
<div class="sbox" style="left:254px;top:121.9px;width:32.6px;height:22.5px;line-height:22px">13</div>
<div class="pill" style="left:258.5px;top:118.4px;width:23.5px;height:8px;line-height:7.5px">CHA</div>
<div class="pill" style="left:262px;top:140.4px;width:16px;height:8px;line-height:7.5px">+1</div>
<div class="cs" style="left:286.8px;top:122.8px">C</div>
<div class="cs" style="left:286.8px;top:133.3px">S</div>
<div style="position:absolute;left:8.0px;top:152.5px;width:290.0px;height:1.0px;background:#6d6a60"></div>
<div class="t sb" style="left:8.6px;top:161.9px;font-size:8.3px;font-weight:400;color:#1f1b17;">Skills</div>
<div class="t " style="left:75.5px;top:161.7px;font-size:8.5px;font-weight:400;color:#1c1a17;">Medicine +7, Persuasion +3, Religion +4</div>
<div class="t sb" style="left:8.6px;top:180.6px;font-size:8.3px;font-weight:400;color:#1f1b17;">Senses</div>
<div class="t " style="left:75.5px;top:180.4px;font-size:8.5px;font-weight:400;color:#1c1a17;">passive Perception 13</div>
<div class="t sb" style="left:8.6px;top:199.3px;font-size:8.3px;font-weight:400;color:#1f1b17;">Languages</div>
<div class="t " style="left:75.5px;top:199.1px;font-size:8.5px;font-weight:400;color:#1c1a17;">Common and Celestial</div>
<div class="t sb" style="left:8.6px;top:218.0px;font-size:8.3px;font-weight:400;color:#1f1b17;">Challenge</div>
<div class="t " style="left:75.5px;top:217.8px;font-size:8.5px;font-weight:400;color:#1c1a17;">2</div>
<div class="t sb" style="left:243.5px;top:218.0px;font-size:8.3px;font-weight:400;color:#1f1b17;">XP</div>
<div class="box" style="left:262px;top:215.6px;width:32.5px;height:15.2px;line-height:14px">450</div>
<div style="position:absolute;left:8.0px;top:235.2px;width:290.0px;height:1.0px;background:#6d6a60"></div>
<div class="t sb" style="left:15.5px;top:239.7px;font-size:8.3px;font-weight:400;color:#1f1b17;">TRAITS</div>
<div style="position:absolute;left:8.0px;top:252.2px;width:290.0px;height:1.0px;background:#6d6a60"></div>
<div style="position:absolute;left:8.0px;top:256.2px;width:283.0px;height:16.0px;background:#c4bfb3"></div>
<div class="t sb" style="left:12.0px;top:260.2px;font-size:8.3px;font-weight:400;color:#1f1b17;">Divine Eminence</div>
<div class="t " style="left:12.5px;top:277.0px;font-size:8.5px;font-weight:400;color:#1c1a17;">As a bonus action, Sareez can expend a spell slot to cause her melee</div>
<div class="t " style="left:12.5px;top:290.8px;font-size:8.5px;font-weight:400;color:#1c1a17;">weapon attacks to magically deal an extra 10 (3d6) radiant damage to a</div>
<div class="t " style="left:12.5px;top:304.6px;font-size:8.5px;font-weight:400;color:#1c1a17;">target on a hit. This benefit lasts until the end of the turn. If Sareez</div>
<div class="t " style="left:12.5px;top:318.4px;font-size:8.5px;font-weight:400;color:#1c1a17;">expends a spell slot of 2nd level or higher, the extra damage increases</div>
<div class="t " style="left:12.5px;top:332.2px;font-size:8.5px;font-weight:400;color:#1c1a17;">by 1d6 for each level above 1st.</div>
<div style="position:absolute;left:8.0px;top:345.2px;width:283.0px;height:16.0px;background:#c4bfb3"></div>
<div class="t sb" style="left:12.0px;top:349.2px;font-size:8.3px;font-weight:400;color:#1f1b17;">Spellcasting</div>
<div style="position:absolute;right:2px;bottom:2px;width:10px;height:10px;background:repeating-linear-gradient(135deg,transparent 0 1.5px,#555 1.5px 2.5px);clip-path:polygon(100% 0,100% 100%,0 100%)"></div>
</div>
<div style="position:absolute;left:418.5px;top:315.5px;width:314.0px;height:375.0px;background:#d0ccc0;box-shadow:0 0 3px rgba(0,0,0,.45);overflow:visible">
<div style="position:absolute;left:0.0px;top:0.0px;width:314.0px;height:26.0px;background:#b3afa8"></div>
<div style="position:absolute;left:8.5px;top:7.5px;width:11.0px;height:11.0px;border-radius:50%;background:radial-gradient(circle at 50% 45%, #c9b7a4 0 12%, #6b4a36 18%, #4a2e20 60%, #2a1a12 100%);box-shadow:0 1px 1px rgba(0,0,0,.35)"></div>
<div class="t " style="left:32.0px;top:8.6px;font-size:12px;font-weight:700;color:#1b1815;">Slavtin Gran</div>
<svg style="position:absolute;left:226px;top:0" width="88" height="26" viewBox="0 0 88 26"><path d="M6.8 9 V7.2 a2.8 2.8 0 0 1 5.6 0 V9" fill="none" stroke="#f4f2ee" stroke-width="2.6"/><path d="M6.8 9 V7.2 a2.8 2.8 0 0 1 5.6 0 V9" fill="none" stroke="#2a2a2a" stroke-width="1.2"/><circle cx="9.6" cy="14" r="5" fill="#2e2e2e" stroke="#f4f2ee" stroke-width="1.2"/><path d="M8 15.5 L11 12.5" stroke="#777" stroke-width="0.8"/><circle cx="24.1" cy="13.7" r="5.9" fill="#cfcbc3" stroke="#14a02a" stroke-width="1.6"/><text x="24.1" y="16.8" font-family="Liberation Sans" font-size="8.2" font-weight="700" fill="#111" text-anchor="middle">ID</text><circle cx="43.4" cy="14.1" r="8.3" fill="#f2eee8" stroke="#2a1a14" stroke-width="0.8"/><path d="M38 22 Q38 14 43.4 13 Q49 14 49 22 Z" fill="#9a4a2a"/><circle cx="43.4" cy="10" r="3.2" fill="#9a4a2a"/><circle cx="43.4" cy="10.6" r="1.8" fill="#d8b8a0"/><ellipse cx="62.3" cy="11.8" rx="6" ry="4.3" fill="#f4f2ec" stroke="#222" stroke-width="1.1"/><path d="M58 14.5 L56.5 18 L61 15.6" fill="#f4f2ec" stroke="#222" stroke-width="1"/><circle cx="79.8" cy="7" r="6.4" fill="#b0aca4" stroke="#8c887f" stroke-width="1"/><path d="M77 4 L82.6 10 M82.6 4 L77 10" stroke="#7f7b73" stroke-width="1.2"/></svg>
<div style="position:absolute;left:299.6px;top:27.0px;width:1.5px;height:338.0px;background:#e09a3a"></div>
<svg style="position:absolute;left:294px;top:25px" width="13" height="50" viewBox="0 0 13 50"><path d="M2 1 L6.5 4 L11 1 M6.5 1 V8" stroke="#d9a548" stroke-width="1.6" fill="none"/><rect x="4.6" y="8" width="3.8" height="40" rx="1.5" fill="#d8a44c" stroke="#9a6a28" stroke-width="0.6"/><rect x="4.2" y="12" width="4.6" height="2" fill="#b88838"/><rect x="4.2" y="36" width="4.6" height="2.5" fill="#b88838"/></svg>
<svg style="position:absolute;left:294px;top:358px" width="13" height="10" viewBox="0 0 13 10"><path d="M6.5 0 V6 M1 8 L6.5 5 L12 8" stroke="#d9a548" stroke-width="1.6" fill="none"/></svg>
<div style="position:absolute;left:305.4px;top:55.0px;width:8.6px;height:51.7px;background:linear-gradient(90deg,#bfbab0,#dcd8ce);clip-path:polygon(0 8%,100% 0,100% 100%,0 92%)"></div>
<div class="t" style="left:306.5px;top:66px;font-size:7.5px;font-weight:700;color:#222;writing-mode:vertical-rl">Main</div>
<div style="position:absolute;left:305.4px;top:106.7px;width:8.6px;height:52.3px;background:linear-gradient(90deg,#bdb8ae,#d6d2c8);clip-path:polygon(0 8%,100% 0,100% 100%,0 92%)"></div>
<div class="t" style="left:306.5px;top:117px;font-size:7.5px;color:#8a867e;writing-mode:vertical-rl">Other</div>
<div class="t " style="left:8.6px;top:32.5px;font-size:9.6px;font-weight:700;color:#1b1815;letter-spacing:-0.15px">Large giant , Neutral Evil</div>
<div style="position:absolute;left:8.0px;top:50.0px;width:290.0px;height:1.0px;background:#6d6a60"></div>
<div class="t sb" style="left:8.6px;top:58.6px;font-size:8.3px;font-weight:400;color:#1f1b17;">Armor Class</div>
<div class="t sb" style="left:8.6px;top:77.4px;font-size:8.3px;font-weight:400;color:#1f1b17;">Hit Points</div>
<div class="t sb" style="left:8.6px;top:96.0px;font-size:8.3px;font-weight:400;color:#1f1b17;">Speed</div>
<div class="box" style="left:73px;top:55.6px;width:32.5px;height:15.4px;line-height:14px">15</div>
<div class="box" style="left:73px;top:74.4px;width:32.5px;height:15.4px;line-height:14px">138</div>
<div class="t " style="left:110.5px;top:58.6px;font-size:8.3px;font-weight:400;color:#24211d;">(patchwork armor)</div>
<div class="t " style="left:110.5px;top:77.4px;font-size:8.3px;font-weight:400;color:#24211d;">(12d12 + 60)</div>
<div class="t " style="left:75.5px;top:96.0px;font-size:8.3px;font-weight:400;color:#1c1a17;">40 ft.</div>
<div style="position:absolute;left:8.0px;top:112.8px;width:290.0px;height:1.0px;background:#6d6a60"></div>
<div class="sbox" style="left:9px;top:121.9px;width:32.6px;height:22.5px;line-height:22px">23</div>
<div class="pill" style="left:13.5px;top:118.4px;width:23.5px;height:8px;line-height:7.5px">STR</div>
<div class="pill" style="left:17px;top:140.4px;width:16px;height:8px;line-height:7.5px">+5</div>
<div class="cs" style="left:41.8px;top:122.8px">C</div>
<div class="cs" style="left:41.8px;top:133.3px">S</div>
<div class="sbox" style="left:58px;top:121.9px;width:32.6px;height:22.5px;line-height:22px">9</div>
<div class="pill" style="left:62.5px;top:118.4px;width:23.5px;height:8px;line-height:7.5px">DEX</div>
<div class="pill" style="left:66px;top:140.4px;width:16px;height:8px;line-height:7.5px">-1</div>
<div class="cs" style="left:90.8px;top:122.8px">C</div>
<div class="cs" style="left:90.8px;top:133.3px">S</div>
<div class="sbox" style="left:107px;top:121.9px;width:32.6px;height:22.5px;line-height:22px">21</div>
<div class="pill" style="left:111.5px;top:118.4px;width:23.5px;height:8px;line-height:7.5px">CON</div>
<div class="pill" style="left:115px;top:140.4px;width:16px;height:8px;line-height:7.5px">+5</div>
<div class="cs" style="left:139.8px;top:122.8px">C</div>
<div class="cs" style="left:139.8px;top:133.3px">S</div>
<div class="sbox" style="left:156px;top:121.9px;width:32.6px;height:22.5px;line-height:22px">9</div>
<div class="pill" style="left:160.5px;top:118.4px;width:23.5px;height:8px;line-height:7.5px">INT</div>
<div class="pill" style="left:164px;top:140.4px;width:16px;height:8px;line-height:7.5px">-1</div>
<div class="cs" style="left:188.8px;top:122.8px">C</div>
<div class="cs" style="left:188.8px;top:133.3px">S</div>
<div class="sbox" style="left:205px;top:121.9px;width:32.6px;height:22.5px;line-height:22px">10</div>
<div class="pill" style="left:209.5px;top:118.4px;width:23.5px;height:8px;line-height:7.5px">WIS</div>
<div class="pill" style="left:213px;top:140.4px;width:16px;height:8px;line-height:7.5px">+0</div>
<div class="cs" style="left:237.8px;top:122.8px">C</div>
<div class="cs" style="left:237.8px;top:133.3px">S</div>
<div class="sbox" style="left:254px;top:121.9px;width:32.6px;height:22.5px;line-height:22px">12</div>
<div class="pill" style="left:258.5px;top:118.4px;width:23.5px;height:8px;line-height:7.5px">CHA</div>
<div class="pill" style="left:262px;top:140.4px;width:16px;height:8px;line-height:7.5px">+1</div>
<div class="cs" style="left:286.8px;top:122.8px">C</div>
<div class="cs" style="left:286.8px;top:133.3px">S</div>
<div style="position:absolute;left:8.0px;top:152.5px;width:290.0px;height:1.0px;background:#6d6a60"></div>
<div class="t sb" style="left:8.6px;top:161.9px;font-size:8.3px;font-weight:400;color:#1f1b17;">Saving Throws</div>
<div class="t " style="left:75.5px;top:161.7px;font-size:8.5px;font-weight:400;color:#1c1a17;">Con +8, Wis +3, Cha +4</div>
<div class="t sb" style="left:8.6px;top:180.6px;font-size:8.3px;font-weight:400;color:#1f1b17;">Skills</div>
<div class="t " style="left:75.5px;top:180.4px;font-size:8.5px;font-weight:400;color:#1c1a17;">Athletics +9, Perception +3</div>
<div class="t sb" style="left:8.6px;top:199.3px;font-size:8.3px;font-weight:400;color:#1f1b17;">Damage Immunities</div>
<div class="t " style="left:106.0px;top:199.1px;font-size:8.5px;font-weight:400;color:#1c1a17;">psychic</div>
<div class="t sb" style="left:8.6px;top:218.0px;font-size:8.3px;font-weight:400;color:#1f1b17;">Senses</div>
<div class="t " style="left:75.5px;top:217.8px;font-size:8.5px;font-weight:400;color:#1c1a17;">passive Perception 13</div>
<div class="t sb" style="left:8.6px;top:236.7px;font-size:8.3px;font-weight:400;color:#1f1b17;">Languages</div>
<div class="t " style="left:75.5px;top:236.5px;font-size:8.5px;font-weight:400;color:#1c1a17;">Giant</div>
<div class="t sb" style="left:8.6px;top:255.4px;font-size:8.3px;font-weight:400;color:#1f1b17;">Challenge</div>
<div class="t " style="left:75.5px;top:255.2px;font-size:8.5px;font-weight:400;color:#1c1a17;">8</div>
<div class="t sb" style="left:243.5px;top:255.4px;font-size:8.3px;font-weight:400;color:#1f1b17;">XP</div>
<div class="box" style="left:262px;top:253.0px;width:32.5px;height:15.2px;line-height:14px">3000</div>
<div style="position:absolute;left:8.0px;top:272.6px;width:290.0px;height:1.0px;background:#6d6a60"></div>
<div class="t sb" style="left:15.5px;top:277.1px;font-size:8.3px;font-weight:400;color:#1f1b17;">TRAITS</div>
<div style="position:absolute;left:8.0px;top:289.6px;width:290.0px;height:1.0px;background:#6d6a60"></div>
<div style="position:absolute;left:8.0px;top:293.6px;width:283.0px;height:16.0px;background:#c4bfb3"></div>
<div class="t sb" style="left:12.0px;top:297.6px;font-size:8.3px;font-weight:400;color:#1f1b17;">Divine Eminence</div>
<div class="t " style="left:12.5px;top:314.4px;font-size:8.5px;font-weight:400;color:#1c1a17;">As a bonus action, Slatvin can expend a spell slot to cause his melee</div>
<div class="t " style="left:12.5px;top:328.2px;font-size:8.5px;font-weight:400;color:#1c1a17;">weapon attacks to magically deal an extra 10 (3d6) necrotic damage to a</div>
<div class="t " style="left:12.5px;top:342.0px;font-size:8.5px;font-weight:400;color:#1c1a17;">target on a hit. This benefit lasts until the end of the turn. If Slatvin</div>
<div class="t " style="left:12.5px;top:355.8px;font-size:8.5px;font-weight:400;color:#1c1a17;">expends a spell slot of 2nd level or higher, the extra damage increases</div>
<div style="position:absolute;right:2px;bottom:2px;width:10px;height:10px;background:repeating-linear-gradient(135deg,transparent 0 1.5px,#555 1.5px 2.5px);clip-path:polygon(100% 0,100% 100%,0 100%)"></div>
</div>
<div style="position:absolute;left:910.0px;top:298.0px;width:314.0px;height:375.0px;background:#d0ccc0;box-shadow:0 0 3px rgba(0,0,0,.45);overflow:visible">
<div style="position:absolute;left:0.0px;top:0.0px;width:314.0px;height:26.0px;background:#b3afa8"></div>
<div style="position:absolute;left:8.5px;top:7.5px;width:11.0px;height:11.0px;border-radius:50%;background:radial-gradient(circle at 50% 45%, #c9b7a4 0 12%, #6b4a36 18%, #4a2e20 60%, #2a1a12 100%);box-shadow:0 1px 1px rgba(0,0,0,.35)"></div>
<div class="t " style="left:32.0px;top:8.6px;font-size:12px;font-weight:700;color:#1b1815;">Underguild Agent</div>
<svg style="position:absolute;left:226px;top:0" width="88" height="26" viewBox="0 0 88 26"><path d="M6.8 9 V7.2 a2.8 2.8 0 0 1 5.6 0 V9" fill="none" stroke="#f4f2ee" stroke-width="2.6"/><path d="M6.8 9 V7.2 a2.8 2.8 0 0 1 5.6 0 V9" fill="none" stroke="#2a2a2a" stroke-width="1.2"/><circle cx="9.6" cy="14" r="5" fill="#2e2e2e" stroke="#f4f2ee" stroke-width="1.2"/><path d="M8 15.5 L11 12.5" stroke="#777" stroke-width="0.8"/><circle cx="24.1" cy="13.7" r="5.9" fill="#cfcbc3" stroke="#14a02a" stroke-width="1.6"/><text x="24.1" y="16.8" font-family="Liberation Sans" font-size="8.2" font-weight="700" fill="#111" text-anchor="middle">ID</text><circle cx="43.4" cy="14.1" r="8.3" fill="#f2eee8" stroke="#2a1a14" stroke-width="0.8"/><path d="M38 22 Q38 14 43.4 13 Q49 14 49 22 Z" fill="#6a4a20"/><circle cx="43.4" cy="10" r="3.2" fill="#6a4a20"/><circle cx="43.4" cy="10.6" r="1.8" fill="#d8b8a0"/><ellipse cx="62.3" cy="11.8" rx="6" ry="4.3" fill="#f4f2ec" stroke="#222" stroke-width="1.1"/><path d="M58 14.5 L56.5 18 L61 15.6" fill="#f4f2ec" stroke="#222" stroke-width="1"/><circle cx="79.8" cy="7" r="6.4" fill="#b0aca4" stroke="#8c887f" stroke-width="1"/><path d="M77 4 L82.6 10 M82.6 4 L77 10" stroke="#7f7b73" stroke-width="1.2"/></svg>
<div style="position:absolute;left:299.6px;top:27.0px;width:1.5px;height:338.0px;background:#e09a3a"></div>
<svg style="position:absolute;left:294px;top:25px" width="13" height="50" viewBox="0 0 13 50"><path d="M2 1 L6.5 4 L11 1 M6.5 1 V8" stroke="#d9a548" stroke-width="1.6" fill="none"/><rect x="4.6" y="8" width="3.8" height="40" rx="1.5" fill="#d8a44c" stroke="#9a6a28" stroke-width="0.6"/><rect x="4.2" y="12" width="4.6" height="2" fill="#b88838"/><rect x="4.2" y="36" width="4.6" height="2.5" fill="#b88838"/></svg>
<svg style="position:absolute;left:294px;top:358px" width="13" height="10" viewBox="0 0 13 10"><path d="M6.5 0 V6 M1 8 L6.5 5 L12 8" stroke="#d9a548" stroke-width="1.6" fill="none"/></svg>
<div style="position:absolute;left:305.4px;top:55.0px;width:8.6px;height:51.7px;background:linear-gradient(90deg,#bfbab0,#dcd8ce);clip-path:polygon(0 8%,100% 0,100% 100%,0 92%)"></div>
<div class="t" style="left:306.5px;top:66px;font-size:7.5px;font-weight:700;color:#222;writing-mode:vertical-rl">Main</div>
<div style="position:absolute;left:305.4px;top:106.7px;width:8.6px;height:52.3px;background:linear-gradient(90deg,#bdb8ae,#d6d2c8);clip-path:polygon(0 8%,100% 0,100% 100%,0 92%)"></div>
<div class="t" style="left:306.5px;top:117px;font-size:7.5px;color:#8a867e;writing-mode:vertical-rl">Other</div>
<div class="t " style="left:8.6px;top:32.5px;font-size:9.6px;font-weight:700;color:#1b1815;letter-spacing:-0.15px">Medium humanoid (any) , any</div>
<div style="position:absolute;left:8.0px;top:50.0px;width:290.0px;height:1.0px;background:#6d6a60"></div>
<div class="t sb" style="left:8.6px;top:58.6px;font-size:8.3px;font-weight:400;color:#1f1b17;">Armor Class</div>
<div class="t sb" style="left:8.6px;top:77.4px;font-size:8.3px;font-weight:400;color:#1f1b17;">Hit Points</div>
<div class="t sb" style="left:8.6px;top:96.0px;font-size:8.3px;font-weight:400;color:#1f1b17;">Speed</div>
<div class="box" style="left:73px;top:55.6px;width:32.5px;height:15.4px;line-height:14px">12</div>
<div class="box" style="left:73px;top:74.4px;width:32.5px;height:15.4px;line-height:14px">27</div>
<div class="t " style="left:110.5px;top:58.6px;font-size:8.3px;font-weight:400;color:#24211d;"></div>
<div class="t " style="left:110.5px;top:77.4px;font-size:8.3px;font-weight:400;color:#24211d;">(6d8)</div>
<div class="t " style="left:75.5px;top:96.0px;font-size:8.3px;font-weight:400;color:#1c1a17;">30 ft.</div>
<div style="position:absolute;left:8.0px;top:112.8px;width:290.0px;height:1.0px;background:#6d6a60"></div>
<div class="sbox" style="left:9px;top:121.9px;width:32.6px;height:22.5px;line-height:22px">10</div>
<div class="pill" style="left:13.5px;top:118.4px;width:23.5px;height:8px;line-height:7.5px">STR</div>
<div class="pill" style="left:17px;top:140.4px;width:16px;height:8px;line-height:7.5px">+0</div>
<div class="cs" style="left:41.8px;top:122.8px">C</div>
<div class="cs" style="left:41.8px;top:133.3px">S</div>
<div class="sbox" style="left:58px;top:121.9px;width:32.6px;height:22.5px;line-height:22px">15</div>
<div class="pill" style="left:62.5px;top:118.4px;width:23.5px;height:8px;line-height:7.5px">DEX</div>
<div class="pill" style="left:66px;top:140.4px;width:16px;height:8px;line-height:7.5px">+2</div>
<div class="cs" style="left:90.8px;top:122.8px">C</div>
<div class="cs" style="left:90.8px;top:133.3px">S</div>
<div class="sbox" style="left:107px;top:121.9px;width:32.6px;height:22.5px;line-height:22px">10</div>
<div class="pill" style="left:111.5px;top:118.4px;width:23.5px;height:8px;line-height:7.5px">CON</div>
<div class="pill" style="left:115px;top:140.4px;width:16px;height:8px;line-height:7.5px">+0</div>
<div class="cs" style="left:139.8px;top:122.8px">C</div>
<div class="cs" style="left:139.8px;top:133.3px">S</div>
<div class="sbox" style="left:156px;top:121.9px;width:32.6px;height:22.5px;line-height:22px">12</div>
<div class="pill" style="left:160.5px;top:118.4px;width:23.5px;height:8px;line-height:7.5px">INT</div>
<div class="pill" style="left:164px;top:140.4px;width:16px;height:8px;line-height:7.5px">+1</div>
<div class="cs" style="left:188.8px;top:122.8px">C</div>
<div class="cs" style="left:188.8px;top:133.3px">S</div>
<div class="sbox" style="left:205px;top:121.9px;width:32.6px;height:22.5px;line-height:22px">14</div>
<div class="pill" style="left:209.5px;top:118.4px;width:23.5px;height:8px;line-height:7.5px">WIS</div>
<div class="pill" style="left:213px;top:140.4px;width:16px;height:8px;line-height:7.5px">+2</div>
<div class="cs" style="left:237.8px;top:122.8px">C</div>
<div class="cs" style="left:237.8px;top:133.3px">S</div>
<div class="sbox" style="left:254px;top:121.9px;width:32.6px;height:22.5px;line-height:22px">16</div>
<div class="pill" style="left:258.5px;top:118.4px;width:23.5px;height:8px;line-height:7.5px">CHA</div>
<div class="pill" style="left:262px;top:140.4px;width:16px;height:8px;line-height:7.5px">+3</div>
<div class="cs" style="left:286.8px;top:122.8px">C</div>
<div class="cs" style="left:286.8px;top:133.3px">S</div>
<div style="position:absolute;left:8.0px;top:152.5px;width:290.0px;height:1.0px;background:#6d6a60"></div>
<div class="t sb" style="left:8.6px;top:161.9px;font-size:8.3px;font-weight:400;color:#1f1b17;">Skills</div>
<div class="t " style="left:75.5px;top:161.7px;font-size:8.5px;font-weight:400;color:#1c1a17;">Deception +5, Insight +4, Investigation +5, Perception</div>
<div class="t " style="left:75.5px;top:175.5px;font-size:8.5px;font-weight:400;color:#1c1a17;">+6, Persuasion +5, Sleight of Hand +4, Stealth +4</div>
<div class="t sb" style="left:8.6px;top:194.4px;font-size:8.3px;font-weight:400;color:#1f1b17;">Senses</div>
<div class="t " style="left:75.5px;top:194.2px;font-size:8.5px;font-weight:400;color:#1c1a17;">Passive Perception 16</div>
<div class="t sb" style="left:8.6px;top:213.1px;font-size:8.3px;font-weight:400;color:#1f1b17;">Languages</div>
<div class="t " style="left:75.5px;top:212.9px;font-size:8.5px;font-weight:400;color:#1c1a17;">Any two languages</div>
<div class="t sb" style="left:8.6px;top:231.8px;font-size:8.3px;font-weight:400;color:#1f1b17;">Challenge</div>
<div class="t " style="left:75.5px;top:231.6px;font-size:8.5px;font-weight:400;color:#1c1a17;">1</div>
<div class="t sb" style="left:243.5px;top:231.8px;font-size:8.3px;font-weight:400;color:#1f1b17;">XP</div>
<div class="box" style="left:262px;top:229.4px;width:32.5px;height:15.2px;line-height:14px">200</div>
<div style="position:absolute;left:8.0px;top:249.0px;width:290.0px;height:1.0px;background:#6d6a60"></div>
<div class="t sb" style="left:15.5px;top:253.5px;font-size:8.3px;font-weight:400;color:#1f1b17;">TRAITS</div>
<div style="position:absolute;left:8.0px;top:266.0px;width:290.0px;height:1.0px;background:#6d6a60"></div>
<div style="position:absolute;left:8.0px;top:270.0px;width:283.0px;height:16.0px;background:#c4bfb3"></div>
<div class="t sb" style="left:12.0px;top:274.0px;font-size:8.3px;font-weight:400;color:#1f1b17;">Cunning Action</div>
<div class="t " style="left:12.5px;top:290.8px;font-size:8.5px;font-weight:400;color:#1c1a17;">On each of its turns, the underguild agent can use a bonus action to take</div>
<div class="t " style="left:12.5px;top:304.6px;font-size:8.5px;font-weight:400;color:#1c1a17;">the Dash, Disengage, or Hide action.</div>
<div style="position:absolute;left:8.0px;top:317.6px;width:283.0px;height:16.0px;background:#c4bfb3"></div>
<div class="t sb" style="left:12.0px;top:321.6px;font-size:8.3px;font-weight:400;color:#1f1b17;">Sneak Attack (1/Turn)</div>
<div class="t " style="left:12.5px;top:338.4px;font-size:8.5px;font-weight:400;color:#1c1a17;">The underguild agent deals an extra 7 (2d6) damage when it hits a</div>
<div class="t " style="left:12.5px;top:352.2px;font-size:8.5px;font-weight:400;color:#1c1a17;">target with a weapon attack and has advantage on the attack roll, or</div>
<div style="position:absolute;right:2px;bottom:2px;width:10px;height:10px;background:repeating-linear-gradient(135deg,transparent 0 1.5px,#555 1.5px 2.5px);clip-path:polygon(100% 0,100% 100%,0 100%)"></div>
</div>
<div style="position:absolute;left:703.5px;top:105.0px;width:226.0px;height:294.0px;filter:url(#lea);background:#000"></div>
<div style="position:absolute;left:704.5px;top:107.0px;width:3.0px;height:290.0px;background:linear-gradient(90deg,#3e2410,#8a5c30,#3e2410)"></div>
<div style="position:absolute;left:704.5px;top:107.5px;width:222.5px;height:3.0px;background:linear-gradient(#3e2410,#8a5c30,#3e2410)"></div>
<div style="position:absolute;left:925.5px;top:107.0px;width:3.0px;height:290.0px;background:linear-gradient(90deg,#3e2410,#8a5c30,#3e2410)"></div>
<div style="position:absolute;left:704.5px;top:393.5px;width:222.5px;height:3.0px;background:linear-gradient(#3e2410,#8a5c30,#3e2410)"></div>
<div style="position:absolute;left:707.5px;top:110.5px;width:1.5px;height:283.0px;background:rgba(0,0,0,.45)"></div>
<div style="position:absolute;left:707.5px;top:110.5px;width:217.5px;height:1.5px;background:rgba(0,0,0,.45)"></div>
<div style="position:absolute;left:714.0px;top:142.8px;width:205.0px;height:229.0px;background:#d8d4c9;box-shadow:inset 1px 1px 2px rgba(0,0,0,.35)"></div>
<div style="position:absolute;left:735.0px;top:150.0px;width:10.0px;height:1.5px;background:#9a958c"></div>
<div style="position:absolute;left:714.0px;top:151.5px;width:205.0px;height:214.5px;overflow:hidden">
<div style="position:absolute;left:12.7px;top:6.2px;width:10.0px;height:10.0px;border-radius:50%;background:radial-gradient(circle at 50% 45%, #c9b7a4 0 12%, #6b4a36 18%, #4a2e20 60%, #2a1a12 100%);box-shadow:0 1px 1px rgba(0,0,0,.35)"></div>
<div class="t sb2" style="left:29.3px;top:8.0px;font-size:8.65px;font-weight:400;color:#1a1612;">Davius</div>
<div style="position:absolute;left:8.5px;top:21.0px;width:183.0px;height:16.7px;background:#c8c0b4"></div>
<div style="position:absolute;left:12.7px;top:22.9px;width:10.0px;height:10.0px;border-radius:50%;background:radial-gradient(circle at 50% 45%, #c9b7a4 0 12%, #6b4a36 18%, #4a2e20 60%, #2a1a12 100%);box-shadow:0 1px 1px rgba(0,0,0,.35)"></div>
<div class="t sb2" style="left:29.3px;top:24.6px;font-size:8.65px;font-weight:400;color:#1a1612;">Forsythe</div>
<div style="position:absolute;left:12.7px;top:39.5px;width:10.0px;height:10.0px;border-radius:50%;background:radial-gradient(circle at 50% 45%, #c9b7a4 0 12%, #6b4a36 18%, #4a2e20 60%, #2a1a12 100%);box-shadow:0 1px 1px rgba(0,0,0,.35)"></div>
<div class="t sb2" style="left:29.3px;top:41.3px;font-size:8.65px;font-weight:400;color:#1a1612;">Ghost of Margrave Alhpert</div>
<div style="position:absolute;left:8.5px;top:54.3px;width:183.0px;height:16.7px;background:#c8c0b4"></div>
<div style="position:absolute;left:12.7px;top:56.2px;width:10.0px;height:10.0px;border-radius:50%;background:radial-gradient(circle at 50% 45%, #c9b7a4 0 12%, #6b4a36 18%, #4a2e20 60%, #2a1a12 100%);box-shadow:0 1px 1px rgba(0,0,0,.35)"></div>
<div class="t sb2" style="left:29.3px;top:58.0px;font-size:8.65px;font-weight:400;color:#1a1612;">Iegen</div>
<div style="position:absolute;left:12.7px;top:72.9px;width:10.0px;height:10.0px;border-radius:50%;background:radial-gradient(circle at 50% 45%, #c9b7a4 0 12%, #6b4a36 18%, #4a2e20 60%, #2a1a12 100%);box-shadow:0 1px 1px rgba(0,0,0,.35)"></div>
<div class="t sb2" style="left:29.3px;top:74.7px;font-size:8.65px;font-weight:400;color:#1a1612;">Jamus Hyne</div>
<div style="position:absolute;left:8.5px;top:87.7px;width:183.0px;height:16.7px;background:#c8c0b4"></div>
<div style="position:absolute;left:12.7px;top:89.6px;width:10.0px;height:10.0px;border-radius:50%;background:radial-gradient(circle at 50% 45%, #c9b7a4 0 12%, #6b4a36 18%, #4a2e20 60%, #2a1a12 100%);box-shadow:0 1px 1px rgba(0,0,0,.35)"></div>
<div class="t sb2" style="left:29.3px;top:91.3px;font-size:8.65px;font-weight:400;color:#1a1612;">Margravine Cassandra Vanderhaven</div>
<div style="position:absolute;left:12.7px;top:106.2px;width:10.0px;height:10.0px;border-radius:50%;background:radial-gradient(circle at 50% 45%, #c9b7a4 0 12%, #6b4a36 18%, #4a2e20 60%, #2a1a12 100%);box-shadow:0 1px 1px rgba(0,0,0,.35)"></div>
<div class="t sb2" style="left:29.3px;top:108.0px;font-size:8.65px;font-weight:400;color:#1a1612;">Mertifrax</div>
<div style="position:absolute;left:8.5px;top:121.0px;width:183.0px;height:16.7px;background:#c8c0b4"></div>
<div style="position:absolute;left:12.7px;top:122.9px;width:10.0px;height:10.0px;border-radius:50%;background:radial-gradient(circle at 50% 45%, #c9b7a4 0 12%, #6b4a36 18%, #4a2e20 60%, #2a1a12 100%);box-shadow:0 1px 1px rgba(0,0,0,.35)"></div>
<div class="t sb2" style="left:29.3px;top:124.7px;font-size:8.65px;font-weight:400;color:#1a1612;">Sareez of Mitra</div>
<div style="position:absolute;left:12.7px;top:139.6px;width:10.0px;height:10.0px;border-radius:50%;background:radial-gradient(circle at 50% 45%, #c9b7a4 0 12%, #6b4a36 18%, #4a2e20 60%, #2a1a12 100%);box-shadow:0 1px 1px rgba(0,0,0,.35)"></div>
<div class="t sb2" style="left:29.3px;top:141.3px;font-size:8.65px;font-weight:400;color:#1a1612;">Slavtin Gran</div>
<div style="position:absolute;left:8.5px;top:154.3px;width:183.0px;height:16.7px;background:#c8c0b4"></div>
<div style="position:absolute;left:12.7px;top:156.2px;width:10.0px;height:10.0px;border-radius:50%;background:radial-gradient(circle at 50% 45%, #c9b7a4 0 12%, #6b4a36 18%, #4a2e20 60%, #2a1a12 100%);box-shadow:0 1px 1px rgba(0,0,0,.35)"></div>
<div class="t sb2" style="left:29.3px;top:158.0px;font-size:8.65px;font-weight:400;color:#1a1612;">Ulaven</div>
<div style="position:absolute;left:12.7px;top:172.9px;width:10.0px;height:10.0px;border-radius:50%;background:radial-gradient(circle at 50% 45%, #c9b7a4 0 12%, #6b4a36 18%, #4a2e20 60%, #2a1a12 100%);box-shadow:0 1px 1px rgba(0,0,0,.35)"></div>
<div class="t sb2" style="left:29.3px;top:174.7px;font-size:8.65px;font-weight:400;color:#1a1612;">Underguild Agent</div>
<div style="position:absolute;left:8.5px;top:187.7px;width:183.0px;height:16.7px;background:#c8c0b4"></div>
<div style="position:absolute;left:12.7px;top:189.6px;width:10.0px;height:10.0px;border-radius:50%;background:radial-gradient(circle at 50% 45%, #c9b7a4 0 12%, #6b4a36 18%, #4a2e20 60%, #2a1a12 100%);box-shadow:0 1px 1px rgba(0,0,0,.35)"></div>
<div class="t sb2" style="left:29.3px;top:191.3px;font-size:8.65px;font-weight:400;color:#1a1612;">Underguild Bouncer</div>
<div style="position:absolute;left:12.7px;top:206.2px;width:10.0px;height:10.0px;border-radius:50%;background:radial-gradient(circle at 50% 45%, #c9b7a4 0 12%, #6b4a36 18%, #4a2e20 60%, #2a1a12 100%);box-shadow:0 1px 1px rgba(0,0,0,.35)"></div>
<div class="t sb2" style="left:29.3px;top:208.0px;font-size:8.65px;font-weight:400;color:#1a1612;">Underguild Thug</div>
</div>
<div style="position:absolute;left:909.5px;top:150.0px;width:1.6px;height:215.0px;background:#d99a3a"></div>
<div style="position:absolute;left:905.0px;top:147.0px;width:10.0px;height:4.0px;background:#d4a450;border-radius:2px"></div>
<div style="position:absolute;left:905.0px;top:362.0px;width:10.0px;height:4.0px;background:#d4a450;border-radius:2px"></div>
<div style="position:absolute;left:908.0px;top:193.0px;width:5.0px;height:10.0px;border:1px solid #c9954a;border-radius:1px"></div>
<div style="position:absolute;left:908.0px;top:295.0px;width:5.0px;height:10.0px;border:1px solid #c9954a;border-radius:1px"></div>
<div style="position:absolute;left:733.0px;top:378.0px;width:176.0px;height:14.0px;background:linear-gradient(#c4c0bc,#b3afab);box-shadow:inset 0 1px 1px rgba(0,0,0,.3)"></div>
<div style="position:absolute;left:721px;top:378px;width:6px;height:10px;border:1.5px solid #d8c040;border-radius:50%;transform:rotate(-20deg)"></div>
<div style="position:absolute;left:764px;top:102px;width:112px;height:30.5px;border-radius:8px;background:linear-gradient(#5e5148,#4a3e36);border:1px solid #2a211c;box-shadow:inset 0 0 0 1.5px #6f6257,0 1px 2px rgba(0,0,0,.6)"></div>
<div style="position:absolute;left:767.5px;top:105.5px;width:105px;height:23.5px;border-radius:6px;border:1px dashed #b0a597"></div>
<div style="position:absolute;left:770.0px;top:111.8px;width:11.0px;height:11.0px;border-radius:50%;background:radial-gradient(circle, #120e0b 0 38%, #6e5c26 46%, #b09848 62%, #8a7434 78%, #4a3e20 95%);"></div>
<div style="position:absolute;left:859.0px;top:111.8px;width:11.0px;height:11.0px;border-radius:50%;background:radial-gradient(circle, #120e0b 0 38%, #6e5c26 46%, #b09848 62%, #8a7434 78%, #4a3e20 95%);"></div>
<div class="t " style="left:803.0px;top:112.0px;font-size:11px;font-weight:700;color:#f0e8d2;font-family:'Liberation Serif',serif;letter-spacing:1.2px;text-shadow:0 1px 1px #000">NPCS</div>
<svg style="position:absolute;left:700px;top:99px;filter:drop-shadow(0 1px 1px rgba(0,0,0,.6))" width="26" height="26" viewBox="0 0 26 26"><g fill="none" stroke="#2a170b" stroke-width="3.6"><circle cx="8.5" cy="8.5" r="4.3"/><circle cx="17.5" cy="8.5" r="4.3"/><circle cx="8.5" cy="17.5" r="4.3"/><circle cx="17.5" cy="17.5" r="4.3"/></g><g fill="none" stroke="#6e4322" stroke-width="0.9"><circle cx="8.5" cy="8.5" r="4.3"/><circle cx="17.5" cy="8.5" r="4.3"/><circle cx="8.5" cy="17.5" r="4.3"/><circle cx="17.5" cy="17.5" r="4.3"/></g></svg>
<svg style="position:absolute;left:911px;top:101px;filter:drop-shadow(0 1px 1px rgba(0,0,0,.6))" width="26" height="26" viewBox="0 0 26 26"><g fill="none" stroke="#2a170b" stroke-width="3.6"><circle cx="8.5" cy="8.5" r="4.3"/><circle cx="17.5" cy="8.5" r="4.3"/><circle cx="8.5" cy="17.5" r="4.3"/><circle cx="17.5" cy="17.5" r="4.3"/></g><g fill="none" stroke="#6e4322" stroke-width="0.9"><circle cx="8.5" cy="8.5" r="4.3"/><circle cx="17.5" cy="8.5" r="4.3"/><circle cx="8.5" cy="17.5" r="4.3"/><circle cx="17.5" cy="17.5" r="4.3"/></g></svg>
<svg style="position:absolute;left:699px;top:377px;filter:drop-shadow(0 1px 1px rgba(0,0,0,.6))" width="26" height="26" viewBox="0 0 26 26"><g fill="none" stroke="#2a170b" stroke-width="3.6"><circle cx="8.5" cy="8.5" r="4.3"/><circle cx="17.5" cy="8.5" r="4.3"/><circle cx="8.5" cy="17.5" r="4.3"/><circle cx="17.5" cy="17.5" r="4.3"/></g><g fill="none" stroke="#6e4322" stroke-width="0.9"><circle cx="8.5" cy="8.5" r="4.3"/><circle cx="17.5" cy="8.5" r="4.3"/><circle cx="8.5" cy="17.5" r="4.3"/><circle cx="17.5" cy="17.5" r="4.3"/></g></svg>
<svg style="position:absolute;left:909px;top:378px;filter:drop-shadow(0 1px 1px rgba(0,0,0,.6))" width="26" height="26" viewBox="0 0 26 26"><g fill="none" stroke="#2a170b" stroke-width="3.6"><circle cx="8.5" cy="8.5" r="4.3"/><circle cx="17.5" cy="8.5" r="4.3"/><circle cx="8.5" cy="17.5" r="4.3"/><circle cx="17.5" cy="17.5" r="4.3"/></g><g fill="none" stroke="#6e4322" stroke-width="0.9"><circle cx="8.5" cy="8.5" r="4.3"/><circle cx="17.5" cy="8.5" r="4.3"/><circle cx="8.5" cy="17.5" r="4.3"/><circle cx="17.5" cy="17.5" r="4.3"/></g></svg>
<div style="position:absolute;left:911.5px;top:110.5px;width:14.5px;height:14.5px;border-radius:50%;background:radial-gradient(circle at 40% 35%,#f0ede6,#cfcac0);border:1px solid #7d776c;color:#7d776c;font:10px/12.5px 'Liberation Sans',sans-serif;text-align:center">&#x2715;</div>
<div style="position:absolute;left:-12px;top:635px;width:40px;height:10.5px;border-radius:5.5px;background:#f4f4f2;box-shadow:0 0 1px #000"></div>
<div class="t " style="left:-1.5px;top:636.6px;font-size:8.5px;font-weight:700;color:#1a1a1a;">GM</div>
<div style="position:absolute;left:-3.0px;top:658.0px;width:32.0px;height:31.0px;background:#a79e8f;border:1.5px dashed #d4ccbb;border-radius:2px;box-shadow:0 0 2px rgba(0,0,0,.5)"></div>
<div class="t " style="left:1.0px;top:662.0px;font-size:16px;font-weight:700;color:#e6dcc0;width:12px;text-align:center">0</div>
<div class="t " style="left:-5.0px;top:680.1px;font-size:7px;font-weight:700;color:#e0d5b8;">Modifier</div>
<div style="position:absolute;left:37px;top:655px;width:26px;height:17.5px;border-radius:7px;background:#a39a8c;border:1.5px solid #d2c9b6;box-shadow:0 1px 2px rgba(0,0,0,.5);color:#fafafa;font:8.5px/14.5px 'Liberation Sans',sans-serif;text-align:center">ADV</div>
<div style="position:absolute;left:37px;top:674px;width:26px;height:17.5px;border-radius:7px;background:#a39a8c;border:1.5px solid #d2c9b6;box-shadow:0 1px 2px rgba(0,0,0,.5);color:#fafafa;font:8.5px/14.5px 'Liberation Sans',sans-serif;text-align:center">DIS</div>
<div style="position:absolute;left:65px;top:655px;width:26px;height:17.5px;border-radius:7px;background:#a39a8c;border:1.5px solid #d2c9b6;box-shadow:0 1px 2px rgba(0,0,0,.5);color:#fafafa;font:8.5px/14.5px 'Liberation Sans',sans-serif;text-align:center">+2</div>
<div style="position:absolute;left:65px;top:674px;width:26px;height:17.5px;border-radius:7px;background:#a39a8c;border:1.5px solid #d2c9b6;box-shadow:0 1px 2px rgba(0,0,0,.5);color:#fafafa;font:8.5px/14.5px 'Liberation Sans',sans-serif;text-align:center">-2</div>
<div style="position:absolute;left:93px;top:655px;width:26px;height:17.5px;border-radius:7px;background:#a39a8c;border:1.5px solid #d2c9b6;box-shadow:0 1px 2px rgba(0,0,0,.5);color:#fafafa;font:8.5px/14.5px 'Liberation Sans',sans-serif;text-align:center">+5</div>
<div style="position:absolute;left:93px;top:674px;width:26px;height:17.5px;border-radius:7px;background:#a39a8c;border:1.5px solid #d2c9b6;box-shadow:0 1px 2px rgba(0,0,0,.5);color:#fafafa;font:8.5px/14.5px 'Liberation Sans',sans-serif;text-align:center">-5</div>
<svg style="position:absolute;left:127.0px;top:656.5px;filter:drop-shadow(1px 2px 1.5px rgba(0,0,0,.55))" width="34" height="33" viewBox="0 0 100 100"><polygon points="50,2 92,24 96,70 56,98 12,84 4,36" fill="#74122c"/><polygon points="50,18 80,62 22,64" fill="#961d3c"/><polygon points="50,2 92,24 80,62 50,18" fill="#74122c"/><polygon points="4,36 50,2 50,18 22,64" fill="#520a1c" opacity=".6"/><polygon points="22,64 80,62 56,98 12,84" fill="#520a1c" opacity=".7"/><text x="50" y="52" font-size="20" font-family="Liberation Sans" font-weight="700" fill="#f3e6ea" text-anchor="middle">8</text><text x="30" y="30" font-size="14" font-family="Liberation Sans" font-weight="700" fill="#f3e6ea" text-anchor="middle">18</text><text x="78" y="50" font-size="13" font-family="Liberation Sans" font-weight="700" fill="#f3e6ea" text-anchor="middle">6</text><text x="38" y="86" font-size="13" font-family="Liberation Sans" font-weight="700" fill="#f3e6ea" text-anchor="middle">12</text></svg>
<svg style="position:absolute;left:163.5px;top:657.0px;filter:drop-shadow(1px 2px 1.5px rgba(0,0,0,.55))" width="31" height="32" viewBox="0 0 100 100"><polygon points="50,2 90,22 98,62 72,96 28,96 2,62 10,22" fill="#74122c"/><polygon points="50,28 76,46 66,76 34,76 24,46" fill="#961d3c"/><text x="50" y="66" font-size="24" font-family="Liberation Sans" font-weight="700" fill="#f3e6ea" text-anchor="middle">7</text><text x="30" y="26" font-size="14" font-family="Liberation Sans" font-weight="700" fill="#f3e6ea" text-anchor="middle">4</text><text x="76" y="28" font-size="13" font-family="Liberation Sans" font-weight="700" fill="#f3e6ea" text-anchor="middle">7</text><text x="20" y="80" font-size="11" font-family="Liberation Sans" font-weight="700" fill="#f3e6ea" text-anchor="middle">10</text></svg>
<svg style="position:absolute;left:196.5px;top:660.0px;filter:drop-shadow(1px 2px 1.5px rgba(0,0,0,.55))" width="34" height="30" viewBox="0 0 100 100"><polygon points="50,6 96,44 84,80 50,98 14,80 2,44" fill="#74122c"/><polygon points="50,6 70,56 50,98 30,56" fill="#961d3c"/><text x="50" y="76" font-size="28" font-family="Liberation Sans" font-weight="700" fill="#f3e6ea" text-anchor="middle">1</text><text x="20" y="58" font-size="16" font-family="Liberation Sans" font-weight="700" fill="#f3e6ea" text-anchor="middle">7</text><text x="80" y="58" font-size="16" font-family="Liberation Sans" font-weight="700" fill="#f3e6ea" text-anchor="middle">3</text></svg>
<svg style="position:absolute;left:233.0px;top:657.0px;filter:drop-shadow(1px 2px 1.5px rgba(0,0,0,.55))" width="30" height="31" viewBox="0 0 100 100"><polygon points="46,2 94,30 88,80 52,98 8,76 4,28" fill="#74122c"/><polygon points="46,2 88,80 8,76" fill="#961d3c"/><text x="52" y="68" font-size="30" font-family="Liberation Sans" font-weight="700" fill="#f3e6ea" text-anchor="middle">3</text><text x="24" y="36" font-size="13" font-family="Liberation Sans" font-weight="700" fill="#f3e6ea" text-anchor="middle">5</text></svg>
<svg style="position:absolute;left:271.7px;top:661.8px;filter:drop-shadow(1px 2px 1.5px rgba(0,0,0,.55))" width="23" height="23" viewBox="0 0 100 100"><rect x="3" y="3" width="94" height="94" rx="12" fill="#74122c"/><rect x="3" y="3" width="94" height="12" rx="6" fill="#c04a6a" opacity=".6"/><text x="50" y="74" font-size="56" font-family="Liberation Sans" font-weight="700" fill="#f3e6ea" text-anchor="middle">5</text></svg>
<svg style="position:absolute;left:303.5px;top:657.0px;filter:drop-shadow(1px 2px 1.5px rgba(0,0,0,.55))" width="28" height="27" viewBox="0 0 100 100"><polygon points="50,2 98,96 2,96" fill="#74122c"/><polygon points="50,2 62,60 98,96" fill="#520a1c" opacity=".8"/><polygon points="50,2 62,60 2,96" fill="#961d3c"/><text x="46" y="66" font-size="18" font-family="Liberation Sans" font-weight="700" fill="#f3e6ea" text-anchor="middle">4</text></svg>
</body></html>
